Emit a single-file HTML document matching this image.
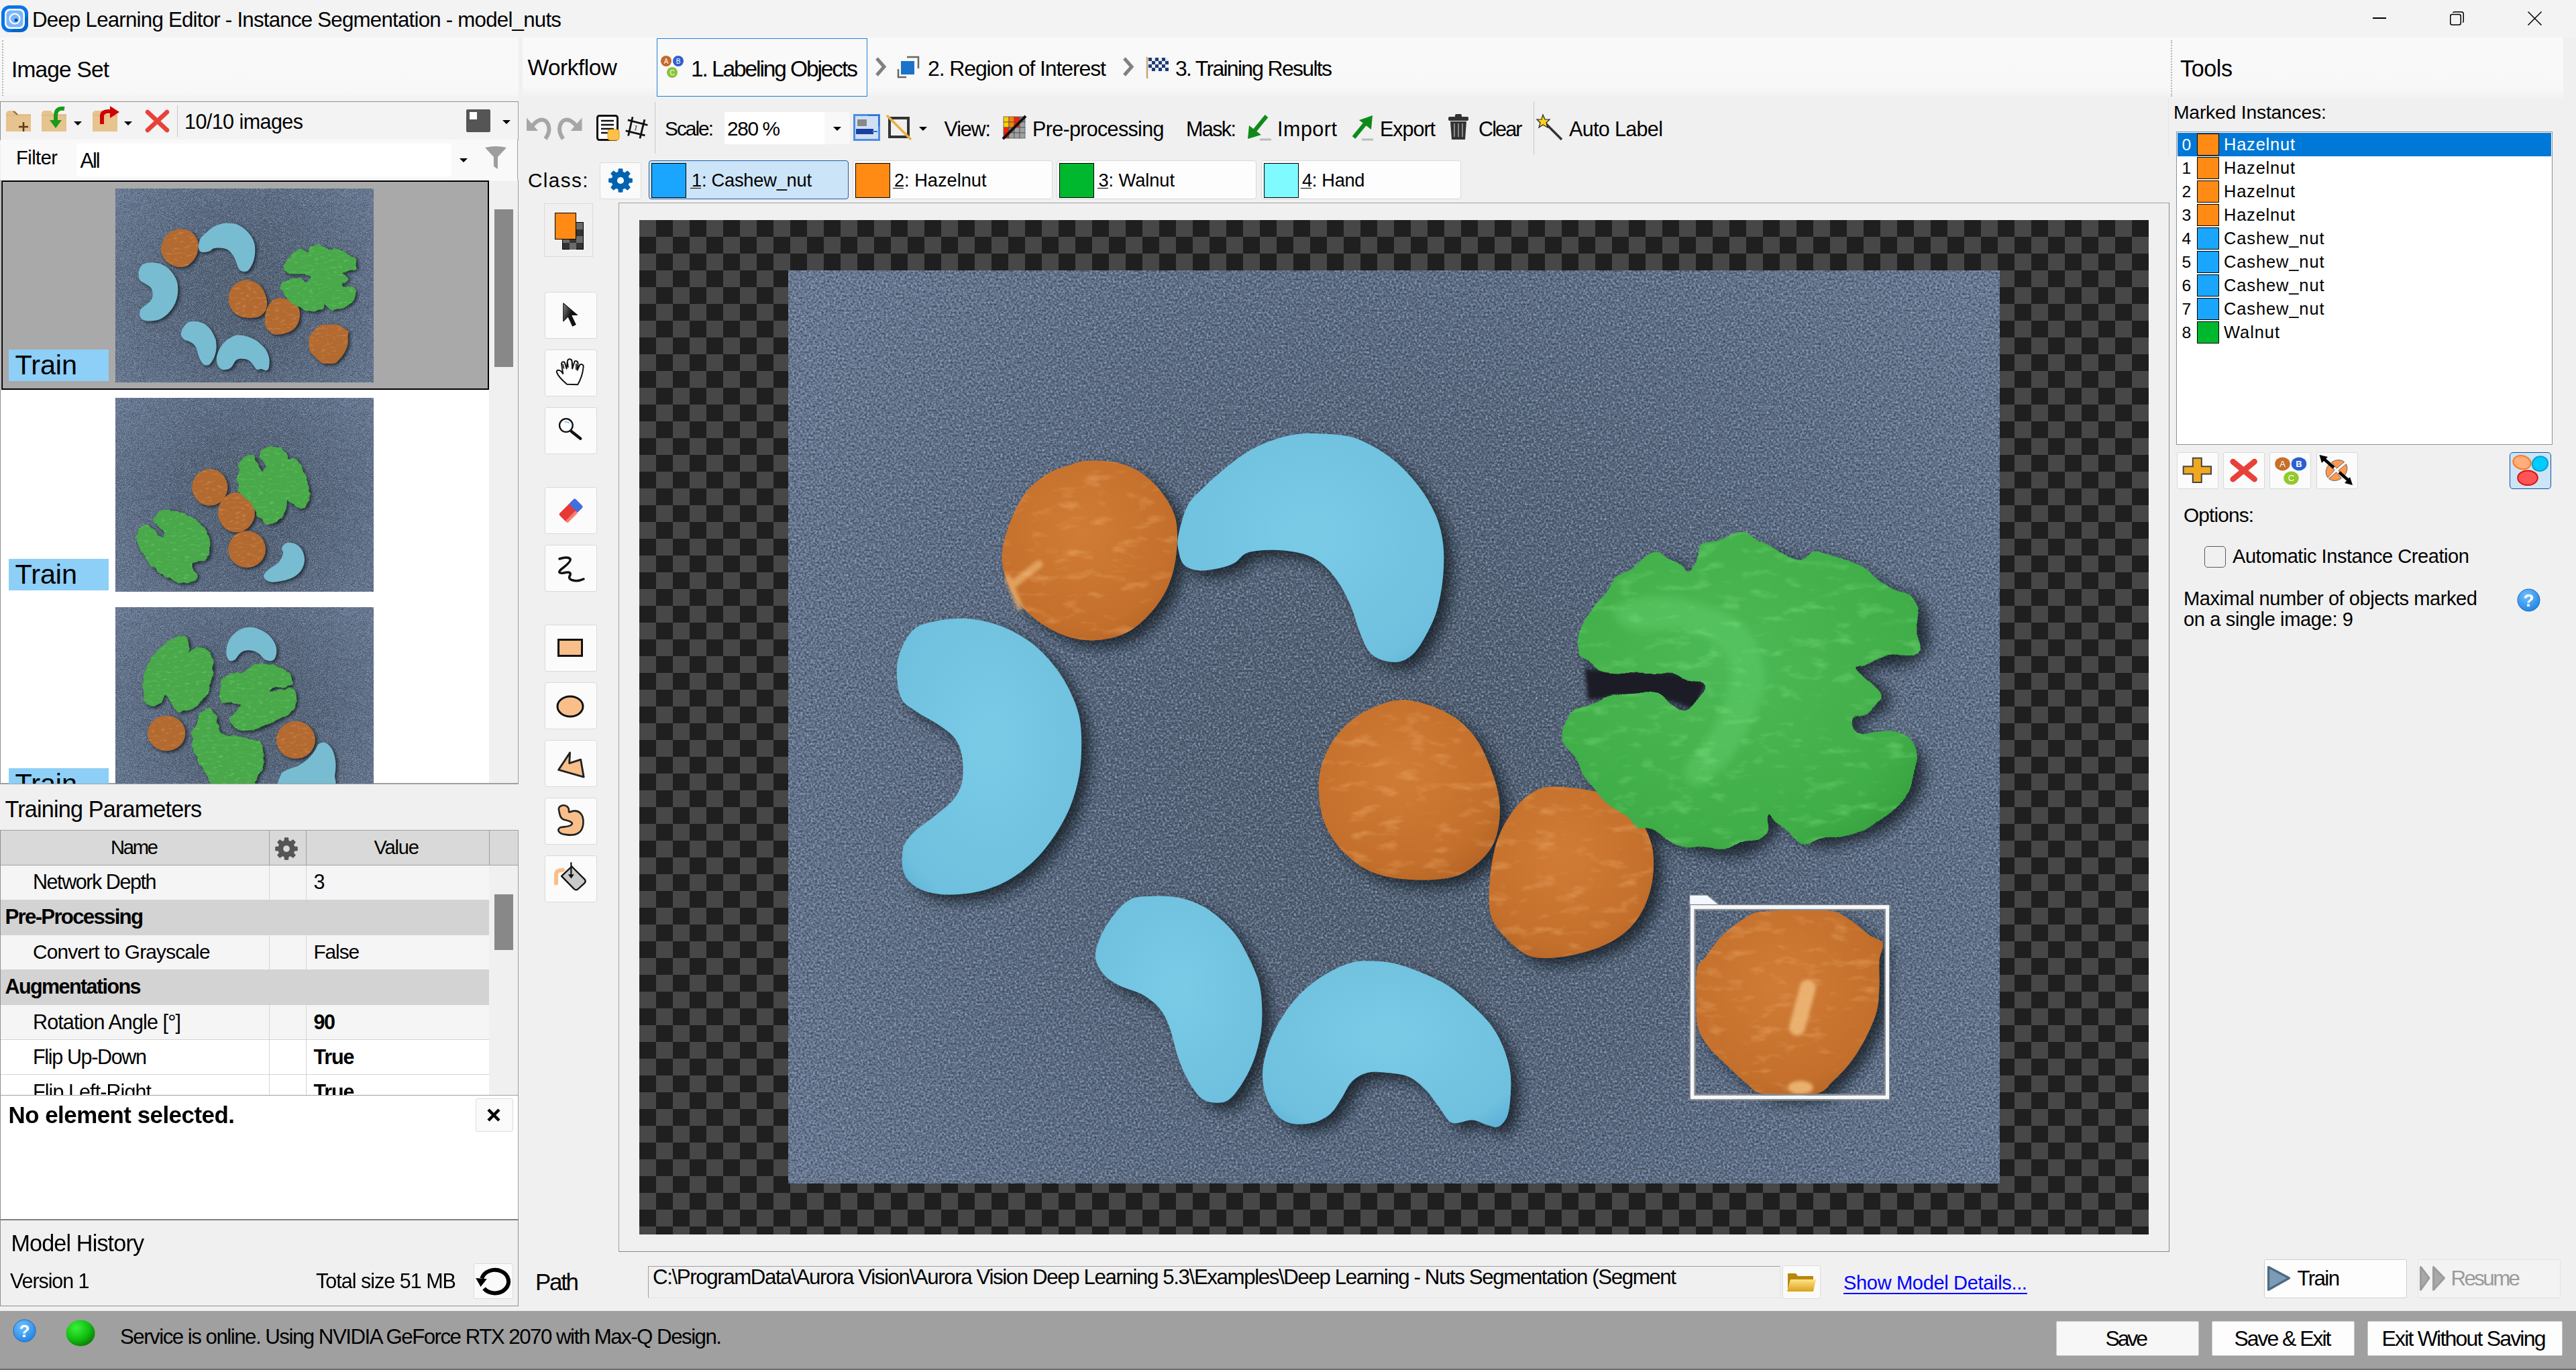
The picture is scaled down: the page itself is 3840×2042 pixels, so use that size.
<!DOCTYPE html><html><head><meta charset="utf-8"><title>Deep Learning Editor</title><style>html,body{margin:0;padding:0;width:3840px;height:2042px;overflow:hidden;background:#f0f0f0;font-family:"Liberation Sans",sans-serif;}
div{position:absolute;box-sizing:border-box;}
.t{white-space:nowrap;}
svg{position:absolute;overflow:visible;}
</style></head><body><svg width="0" height="0" style="position:absolute;left:0;top:0"><defs><radialGradient id="bgG" gradientUnits="userSpaceOnUse" cx="930" cy="760" r="1150"><stop offset="0" stop-color="#4f5b6c"/><stop offset="0.45" stop-color="#56647a"/><stop offset="0.8" stop-color="#627189"/><stop offset="1" stop-color="#6a7892"/></radialGradient><radialGradient id="hzG" cx="0.45" cy="0.4" r="0.65"><stop offset="0" stop-color="#d07c36"/><stop offset="0.8" stop-color="#c4702c"/><stop offset="1" stop-color="#b86628"/></radialGradient><radialGradient id="csG" cx="0.5" cy="0.45" r="0.7"><stop offset="0" stop-color="#7acbe6"/><stop offset="0.85" stop-color="#6ec0de"/><stop offset="1" stop-color="#5eb2d8"/></radialGradient><radialGradient id="wnG" cx="0.45" cy="0.4" r="0.7"><stop offset="0" stop-color="#4cb955"/><stop offset="0.8" stop-color="#40ad48"/><stop offset="1" stop-color="#35a03d"/></radialGradient><filter id="nz" color-interpolation-filters="sRGB" x="0" y="0" width="1" height="1" filterUnits="objectBoundingBox"><feTurbulence type="fractalNoise" baseFrequency="0.32" numOctaves="2" seed="7" result="n"/><feColorMatrix in="n" type="matrix" values="0 0 0 0 0.6  0 0 0 0 0.7  0 0 0 0 0.8  2.4 0 0 0 -1.2" result="l"/><feColorMatrix in="n" type="matrix" values="0 0 0 0 0.2  0 0 0 0 0.25  0 0 0 0 0.3  -2.4 0 0 0 1.2" result="d"/><feMerge><feMergeNode in="l"/><feMergeNode in="d"/></feMerge></filter><filter id="nz2" x="0" y="0" width="1" height="1"><feTurbulence type="fractalNoise" baseFrequency="0.03 0.06" numOctaves="3" seed="2" result="n"/><feColorMatrix in="n" type="matrix" values="0 0 0 0 0  0 0 0 0 0  0 0 0 0 0  0.9 0 0 0 -0.38" result="m"/><feComposite in="m" in2="SourceGraphic" operator="in"/></filter><filter id="lump" x="-0.1" y="-0.1" width="1.2" height="1.2"><feTurbulence type="fractalNoise" baseFrequency="0.022" numOctaves="1" seed="11" result="t"/><feDisplacementMap in="SourceGraphic" in2="t" scale="34" xChannelSelector="R" yChannelSelector="G"/></filter><filter id="tex" color-interpolation-filters="sRGB" x="0" y="0" width="1" height="1"><feTurbulence type="fractalNoise" baseFrequency="0.025 0.06" numOctaves="3" seed="5" result="n"/><feColorMatrix in="n" type="matrix" values="0 0 0 0 0  0 0 0 0 0  0 0 0 0 0  1.0 0 0 0 -0.55" result="m"/><feComposite in="SourceGraphic" in2="m" operator="in"/></filter><filter id="shd" x="-0.2" y="-0.2" width="1.4" height="1.4"><feGaussianBlur stdDeviation="9"/></filter><filter id="bl2" x="-0.3" y="-0.3" width="1.6" height="1.6"><feGaussianBlur stdDeviation="2.5"/></filter><filter id="bl4" x="-0.2" y="-0.2" width="1.4" height="1.4"><feGaussianBlur stdDeviation="6"/></filter><g id="img1"><rect width="1818" height="1370" fill="url(#bgG)"/><rect width="1818" height="1370" fill="#000" filter="url(#nz)"/><g filter="url(#shd)" fill="#10151c" opacity="0.72" transform="translate(13,11)"><path d="M448.5,285.7 C460.8,285.1 481.5,285.6 495.5,289.0 C509.5,292.4 521.3,297.9 532.5,305.8 C543.7,313.7 554.7,324.9 562.8,336.1 C570.9,347.3 577.9,359.0 581.3,373.0 C584.7,387.0 584.4,404.4 583.0,420.1 C581.6,435.8 578.5,452.5 572.9,467.1 C567.3,481.7 559.4,495.2 549.3,507.5 C539.2,519.8 525.7,533.3 512.3,541.1 C498.9,548.9 483.2,552.8 468.7,554.5 C454.1,556.2 439.6,555.1 425.0,551.2 C410.4,547.3 394.2,539.4 381.3,531.0 C368.4,522.6 356.7,512.0 347.7,500.8 C338.7,489.6 332.0,476.3 327.5,464.0 C323.0,451.7 320.2,440.5 320.8,427.0 C321.4,413.5 325.3,398.2 330.9,383.1 C336.5,368.0 344.9,349.0 354.4,336.1 C363.9,323.2 376.8,313.1 388.0,305.8 C399.2,298.5 411.5,295.8 421.6,292.4 C431.7,289.0 436.2,286.3 448.5,285.7 Z"/><path d="M925.0,644.5 C945.0,645.3 972.5,655.3 990.0,664.5 C1007.5,673.7 1019.2,685.3 1030.0,699.5 C1040.8,713.7 1048.8,732.8 1055.0,749.5 C1061.2,766.2 1066.2,782.8 1067.5,799.5 C1068.8,816.2 1067.1,835.3 1062.5,849.5 C1057.9,863.7 1050.4,874.5 1040.0,884.5 C1029.6,894.5 1016.7,904.5 1000.0,909.5 C983.3,914.5 960.0,915.3 940.0,914.5 C920.0,913.7 897.5,911.2 880.0,904.5 C862.5,897.8 847.5,887.0 835.0,874.5 C822.5,862.0 811.5,846.2 805.0,829.5 C798.5,812.8 796.0,791.2 796.0,774.5 C796.0,757.8 799.3,743.7 805.0,729.5 C810.7,715.3 819.2,701.2 830.0,689.5 C840.8,677.8 854.2,667.0 870.0,659.5 C885.8,652.0 905.0,643.7 925.0,644.5 Z"/><path d="M1150.0,774.5 C1167.5,774.5 1200.0,777.8 1220.0,784.5 C1240.0,791.2 1257.5,802.0 1270.0,814.5 C1282.5,827.0 1290.4,843.7 1295.0,859.5 C1299.6,875.3 1299.2,893.7 1297.5,909.5 C1295.8,925.3 1291.2,941.2 1285.0,954.5 C1278.8,967.8 1270.8,979.5 1260.0,989.5 C1249.2,999.5 1235.8,1007.8 1220.0,1014.5 C1204.2,1021.2 1182.5,1027.0 1165.0,1029.5 C1147.5,1032.0 1129.2,1033.7 1115.0,1029.5 C1100.8,1025.3 1090.0,1014.5 1080.0,1004.5 C1070.0,994.5 1059.6,983.7 1055.0,969.5 C1050.4,955.3 1051.2,937.8 1052.5,919.5 C1053.8,901.2 1057.1,877.0 1062.5,859.5 C1067.9,842.0 1076.2,827.0 1085.0,814.5 C1093.8,802.0 1104.2,791.2 1115.0,784.5 C1125.8,777.8 1132.5,774.5 1150.0,774.5 Z"/><path d="M1463.8,961.8 C1484.6,959.7 1537.5,958.7 1558.7,960.6 C1579.9,962.5 1580.4,966.9 1591.2,973.1 C1602.0,979.4 1615.2,992.1 1623.7,998.1 C1632.2,1004.1 1640.1,1003.0 1642.4,1009.3 C1644.7,1015.5 1638.2,1025.0 1637.4,1035.6 C1636.6,1046.2 1638.0,1060.5 1637.4,1073.0 C1636.8,1085.5 1636.8,1098.0 1633.7,1110.5 C1630.6,1123.0 1625.0,1135.5 1618.7,1148.0 C1612.5,1160.5 1604.5,1174.2 1596.2,1185.5 C1587.9,1196.8 1577.9,1207.2 1568.7,1215.5 C1559.5,1223.8 1558.7,1232.2 1541.2,1235.5 C1523.7,1238.8 1480.9,1238.0 1463.8,1235.5 C1446.7,1233.0 1448.0,1227.6 1438.8,1220.5 C1429.6,1213.4 1418.4,1202.2 1408.8,1193.0 C1399.2,1183.8 1388.6,1175.1 1381.3,1165.5 C1374.0,1155.9 1368.1,1146.8 1365.0,1135.5 C1361.9,1124.2 1362.7,1112.6 1362.5,1098.0 C1362.3,1083.4 1361.5,1059.2 1363.8,1048.0 C1366.1,1036.8 1370.0,1038.9 1376.3,1030.6 C1382.5,1022.3 1391.7,1007.7 1401.3,998.1 C1410.9,988.5 1423.4,979.2 1433.8,973.1 C1444.2,967.0 1443.0,963.9 1463.8,961.8 Z"/><path d="M585.5,397.2 C587.8,386.0 593.0,364.6 599.5,352.5 C606.0,340.4 615.8,333.5 624.6,324.6 C633.4,315.8 642.3,307.8 652.5,299.4 C662.7,291.0 674.8,281.3 686.0,274.3 C697.2,267.3 707.5,262.1 719.6,257.5 C731.7,252.8 745.2,248.5 758.7,246.4 C772.2,244.3 786.5,244.5 800.5,245.0 C814.5,245.5 829.8,246.2 842.4,249.2 C855.0,252.2 864.7,257.1 875.9,263.1 C887.1,269.2 899.2,277.1 909.5,285.5 C919.8,293.9 929.0,303.6 937.4,313.4 C945.8,323.2 953.2,332.9 959.7,344.1 C966.2,355.3 972.5,367.8 976.5,380.4 C980.5,393.0 982.6,405.5 983.5,419.5 C984.4,433.5 983.7,449.3 982.1,464.2 C980.5,479.1 977.4,495.9 973.7,508.9 C970.0,521.9 965.3,531.7 959.7,542.4 C954.1,553.1 947.2,565.6 940.2,573.1 C933.2,580.6 926.2,585.2 917.8,587.1 C909.4,589.0 897.8,587.1 889.9,584.3 C882.0,581.5 876.0,577.8 870.4,570.3 C864.8,562.8 860.6,550.3 856.4,539.6 C852.2,528.9 849.9,517.3 845.2,506.1 C840.6,494.9 834.5,482.4 828.5,472.6 C822.5,462.8 815.9,454.4 808.9,447.4 C801.9,440.4 795.0,434.9 786.6,430.7 C778.2,426.5 769.0,424.2 758.7,422.3 C748.5,420.4 736.8,419.3 725.1,419.5 C713.5,419.7 698.1,420.4 688.8,423.7 C679.5,427.0 676.8,435.2 669.3,439.1 C661.8,443.1 653.0,445.5 644.1,447.4 C635.2,449.2 624.6,451.1 616.2,450.2 C607.8,449.3 599.0,447.0 593.9,441.9 C588.8,436.8 586.9,426.9 585.5,419.5 C584.1,412.1 583.2,408.4 585.5,397.2 Z"/><path d="M162.9,601.7 C162.9,589.3 165.2,578.6 169.7,567.9 C174.2,557.2 180.9,544.5 189.9,537.5 C198.9,530.5 211.3,528.2 223.7,525.7 C236.1,523.2 250.8,521.8 264.3,522.3 C277.8,522.8 291.9,525.4 304.9,529.0 C317.8,532.6 330.2,537.7 342.0,544.2 C353.8,550.7 365.7,558.9 375.8,567.9 C385.9,576.9 395.0,587.6 402.9,598.3 C410.8,609.0 417.6,620.3 423.2,632.1 C428.8,643.9 433.9,656.3 436.7,669.3 C439.5,682.3 440.1,695.2 440.1,709.9 C440.1,724.5 439.5,741.4 436.7,757.2 C433.9,773.0 429.4,789.3 423.2,804.5 C417.0,819.7 408.5,834.9 399.5,848.4 C390.5,861.9 380.9,874.3 369.1,885.6 C357.3,896.9 343.1,908.1 328.5,916.0 C313.9,923.9 297.5,929.6 281.2,933.0 C264.9,936.4 245.2,937.4 230.5,936.3 C215.8,935.2 202.9,931.8 193.3,926.2 C183.7,920.6 176.4,912.6 173.0,902.5 C169.6,892.4 170.2,875.4 173.0,865.3 C175.8,855.2 182.0,849.6 189.9,841.7 C197.8,833.8 210.8,825.9 220.4,818.0 C230.0,810.1 240.7,802.9 247.4,794.4 C254.2,785.9 258.6,778.0 260.9,767.3 C263.1,756.6 262.6,740.8 260.9,730.1 C259.2,719.4 256.4,711.0 250.8,703.1 C245.2,695.2 236.7,689.6 227.1,682.8 C217.5,676.0 202.9,669.2 193.3,662.5 C183.7,655.8 174.8,652.4 169.7,642.3 C164.6,632.2 162.9,614.1 162.9,601.7 Z"/><path d="M461.0,1031.0 C460.0,1021.7 463.7,1011.3 468.0,1001.0 C472.3,990.7 479.5,978.5 487.0,969.0 C494.5,959.5 503.2,949.0 513.0,944.0 C522.8,939.0 534.0,939.5 546.0,939.0 C558.0,938.5 573.0,938.8 585.0,941.0 C597.0,943.2 608.2,947.3 618.0,952.0 C627.8,956.7 635.3,961.8 644.0,969.0 C652.7,976.2 662.5,985.3 670.0,995.0 C677.5,1004.7 683.0,1015.0 689.0,1027.0 C695.0,1039.0 702.3,1053.8 706.0,1067.0 C709.7,1080.2 710.5,1093.0 711.0,1106.0 C711.5,1119.0 711.0,1132.0 709.0,1145.0 C707.0,1158.0 703.3,1172.0 699.0,1184.0 C694.7,1196.0 689.0,1207.2 683.0,1217.0 C677.0,1226.8 669.5,1237.7 663.0,1243.0 C656.5,1248.3 651.0,1249.0 644.0,1249.0 C637.0,1249.0 628.2,1248.3 621.0,1243.0 C613.8,1237.7 607.0,1227.3 601.0,1217.0 C595.0,1206.7 589.8,1194.7 585.0,1181.0 C580.2,1167.3 576.8,1147.5 572.0,1135.0 C567.2,1122.5 563.0,1114.2 556.0,1106.0 C549.0,1097.8 539.8,1091.5 530.0,1086.0 C520.2,1080.5 506.3,1077.8 497.0,1073.0 C487.7,1068.2 480.0,1064.0 474.0,1057.0 C468.0,1050.0 462.0,1040.3 461.0,1031.0 Z"/><path d="M712.0,1200.0 C713.0,1187.0 717.0,1171.5 722.0,1158.0 C727.0,1144.5 734.3,1131.0 742.0,1119.0 C749.7,1107.0 758.3,1095.8 768.0,1086.0 C777.7,1076.2 788.0,1067.7 800.0,1060.0 C812.0,1052.3 828.0,1044.0 840.0,1040.0 C852.0,1036.0 860.2,1036.0 872.0,1036.0 C883.8,1036.0 897.8,1037.0 911.0,1040.0 C924.2,1043.0 937.8,1048.5 951.0,1054.0 C964.2,1059.5 978.2,1065.5 990.0,1073.0 C1001.8,1080.5 1011.7,1089.7 1022.0,1099.0 C1032.3,1108.3 1043.8,1118.7 1052.0,1129.0 C1060.2,1139.3 1065.8,1149.2 1071.0,1161.0 C1076.2,1172.8 1080.8,1187.5 1083.0,1200.0 C1085.2,1212.5 1084.7,1224.5 1084.0,1236.0 C1083.3,1247.5 1082.2,1260.8 1079.0,1269.0 C1075.8,1277.2 1070.2,1282.8 1065.0,1285.0 C1059.8,1287.2 1054.5,1283.7 1048.0,1282.0 C1041.5,1280.3 1034.7,1275.5 1026.0,1275.0 C1017.3,1274.5 1004.2,1282.2 996.0,1279.0 C987.8,1275.8 983.5,1264.2 977.0,1256.0 C970.5,1247.8 964.7,1237.7 957.0,1230.0 C949.3,1222.3 940.8,1214.3 931.0,1210.0 C921.2,1205.7 908.3,1205.0 898.0,1204.0 C887.7,1203.0 877.7,1201.8 869.0,1204.0 C860.3,1206.2 852.5,1210.5 846.0,1217.0 C839.5,1223.5 835.5,1234.8 830.0,1243.0 C824.5,1251.2 820.2,1260.0 813.0,1266.0 C805.8,1272.0 796.7,1276.7 787.0,1279.0 C777.3,1281.3 764.2,1282.2 755.0,1280.0 C745.8,1277.8 738.5,1273.3 732.0,1266.0 C725.5,1258.7 719.3,1247.0 716.0,1236.0 C712.7,1225.0 711.0,1213.0 712.0,1200.0 Z"/><path d="M1185.0,564.5 C1185.8,555.3 1188.3,538.7 1195.0,524.5 C1201.7,510.3 1213.3,492.8 1225.0,479.5 C1236.7,466.2 1251.7,453.7 1265.0,444.5 C1278.3,435.3 1294.2,426.2 1305.0,424.5 C1315.8,422.8 1322.5,429.5 1330.0,434.5 C1337.5,439.5 1343.3,458.7 1350.0,454.5 C1356.7,450.3 1359.2,418.2 1370.0,409.5 C1380.8,400.8 1399.2,402.0 1415.0,402.0 C1430.8,402.0 1450.0,405.3 1465.0,409.5 C1480.0,413.7 1492.5,425.3 1505.0,427.0 C1517.5,428.7 1525.8,418.2 1540.0,419.5 C1554.2,420.8 1573.3,427.0 1590.0,434.5 C1606.7,442.0 1624.2,456.2 1640.0,464.5 C1655.8,472.8 1675.4,474.5 1685.0,484.5 C1694.6,494.5 1695.8,512.0 1697.5,524.5 C1699.2,537.0 1699.6,550.3 1695.0,559.5 C1690.4,568.7 1682.5,574.9 1670.0,579.5 C1657.5,584.1 1631.7,584.5 1620.0,587.0 C1608.3,589.5 1598.3,589.9 1600.0,594.5 C1601.7,599.1 1623.3,607.0 1630.0,614.5 C1636.7,622.0 1642.5,632.0 1640.0,639.5 C1637.5,647.0 1622.5,654.5 1615.0,659.5 C1607.5,664.5 1597.5,665.3 1595.0,669.5 C1592.5,673.7 1592.5,680.3 1600.0,684.5 C1607.5,688.7 1625.8,690.3 1640.0,694.5 C1654.2,698.7 1676.7,698.7 1685.0,709.5 C1693.3,720.3 1691.7,746.2 1690.0,759.5 C1688.3,772.8 1683.3,778.7 1675.0,789.5 C1666.7,800.3 1654.2,815.3 1640.0,824.5 C1625.8,833.7 1606.7,839.5 1590.0,844.5 C1573.3,849.5 1554.2,854.5 1540.0,854.5 C1525.8,854.5 1515.0,851.2 1505.0,844.5 C1495.0,837.8 1485.8,816.2 1480.0,814.5 C1474.2,812.8 1476.7,827.0 1470.0,834.5 C1463.3,842.0 1451.7,853.7 1440.0,859.5 C1428.3,865.3 1416.7,869.5 1400.0,869.5 C1383.3,869.5 1358.3,864.5 1340.0,859.5 C1321.7,854.5 1305.0,847.8 1290.0,839.5 C1275.0,831.2 1262.5,819.5 1250.0,809.5 C1237.5,799.5 1225.8,791.2 1215.0,779.5 C1204.2,767.8 1192.5,752.8 1185.0,739.5 C1177.5,726.2 1171.7,712.8 1170.0,699.5 C1168.3,686.2 1166.7,669.5 1175.0,659.5 C1183.3,649.5 1202.5,643.7 1220.0,639.5 C1237.5,635.3 1261.7,633.7 1280.0,634.5 C1298.3,635.3 1316.7,641.2 1330.0,644.5 C1343.3,647.8 1352.9,658.7 1360.0,654.5 C1367.1,650.3 1375.8,627.4 1372.5,619.5 C1369.2,611.6 1357.1,609.5 1340.0,607.0 C1322.9,604.5 1290.8,605.8 1270.0,604.5 C1249.2,603.2 1228.3,603.7 1215.0,599.5 C1201.7,595.3 1195.0,585.3 1190.0,579.5 C1185.0,573.7 1184.2,573.7 1185.0,564.5 Z"/></g><path d="M1195,598 L1270,602 L1342,606 L1376,620 L1362,660 L1330,648 L1280,638 L1200,645 Z" fill="#1a1e26" filter="url(#bl2)"/><path d="M448.5,285.7 C460.8,285.1 481.5,285.6 495.5,289.0 C509.5,292.4 521.3,297.9 532.5,305.8 C543.7,313.7 554.7,324.9 562.8,336.1 C570.9,347.3 577.9,359.0 581.3,373.0 C584.7,387.0 584.4,404.4 583.0,420.1 C581.6,435.8 578.5,452.5 572.9,467.1 C567.3,481.7 559.4,495.2 549.3,507.5 C539.2,519.8 525.7,533.3 512.3,541.1 C498.9,548.9 483.2,552.8 468.7,554.5 C454.1,556.2 439.6,555.1 425.0,551.2 C410.4,547.3 394.2,539.4 381.3,531.0 C368.4,522.6 356.7,512.0 347.7,500.8 C338.7,489.6 332.0,476.3 327.5,464.0 C323.0,451.7 320.2,440.5 320.8,427.0 C321.4,413.5 325.3,398.2 330.9,383.1 C336.5,368.0 344.9,349.0 354.4,336.1 C363.9,323.2 376.8,313.1 388.0,305.8 C399.2,298.5 411.5,295.8 421.6,292.4 C431.7,289.0 436.2,286.3 448.5,285.7 Z" fill="url(#hzG)"/><path d="M925.0,644.5 C945.0,645.3 972.5,655.3 990.0,664.5 C1007.5,673.7 1019.2,685.3 1030.0,699.5 C1040.8,713.7 1048.8,732.8 1055.0,749.5 C1061.2,766.2 1066.2,782.8 1067.5,799.5 C1068.8,816.2 1067.1,835.3 1062.5,849.5 C1057.9,863.7 1050.4,874.5 1040.0,884.5 C1029.6,894.5 1016.7,904.5 1000.0,909.5 C983.3,914.5 960.0,915.3 940.0,914.5 C920.0,913.7 897.5,911.2 880.0,904.5 C862.5,897.8 847.5,887.0 835.0,874.5 C822.5,862.0 811.5,846.2 805.0,829.5 C798.5,812.8 796.0,791.2 796.0,774.5 C796.0,757.8 799.3,743.7 805.0,729.5 C810.7,715.3 819.2,701.2 830.0,689.5 C840.8,677.8 854.2,667.0 870.0,659.5 C885.8,652.0 905.0,643.7 925.0,644.5 Z" fill="url(#hzG)"/><path d="M1150.0,774.5 C1167.5,774.5 1200.0,777.8 1220.0,784.5 C1240.0,791.2 1257.5,802.0 1270.0,814.5 C1282.5,827.0 1290.4,843.7 1295.0,859.5 C1299.6,875.3 1299.2,893.7 1297.5,909.5 C1295.8,925.3 1291.2,941.2 1285.0,954.5 C1278.8,967.8 1270.8,979.5 1260.0,989.5 C1249.2,999.5 1235.8,1007.8 1220.0,1014.5 C1204.2,1021.2 1182.5,1027.0 1165.0,1029.5 C1147.5,1032.0 1129.2,1033.7 1115.0,1029.5 C1100.8,1025.3 1090.0,1014.5 1080.0,1004.5 C1070.0,994.5 1059.6,983.7 1055.0,969.5 C1050.4,955.3 1051.2,937.8 1052.5,919.5 C1053.8,901.2 1057.1,877.0 1062.5,859.5 C1067.9,842.0 1076.2,827.0 1085.0,814.5 C1093.8,802.0 1104.2,791.2 1115.0,784.5 C1125.8,777.8 1132.5,774.5 1150.0,774.5 Z" fill="url(#hzG)"/><path d="M1463.8,961.8 C1484.6,959.7 1537.5,958.7 1558.7,960.6 C1579.9,962.5 1580.4,966.9 1591.2,973.1 C1602.0,979.4 1615.2,992.1 1623.7,998.1 C1632.2,1004.1 1640.1,1003.0 1642.4,1009.3 C1644.7,1015.5 1638.2,1025.0 1637.4,1035.6 C1636.6,1046.2 1638.0,1060.5 1637.4,1073.0 C1636.8,1085.5 1636.8,1098.0 1633.7,1110.5 C1630.6,1123.0 1625.0,1135.5 1618.7,1148.0 C1612.5,1160.5 1604.5,1174.2 1596.2,1185.5 C1587.9,1196.8 1577.9,1207.2 1568.7,1215.5 C1559.5,1223.8 1558.7,1232.2 1541.2,1235.5 C1523.7,1238.8 1480.9,1238.0 1463.8,1235.5 C1446.7,1233.0 1448.0,1227.6 1438.8,1220.5 C1429.6,1213.4 1418.4,1202.2 1408.8,1193.0 C1399.2,1183.8 1388.6,1175.1 1381.3,1165.5 C1374.0,1155.9 1368.1,1146.8 1365.0,1135.5 C1361.9,1124.2 1362.7,1112.6 1362.5,1098.0 C1362.3,1083.4 1361.5,1059.2 1363.8,1048.0 C1366.1,1036.8 1370.0,1038.9 1376.3,1030.6 C1382.5,1022.3 1391.7,1007.7 1401.3,998.1 C1410.9,988.5 1423.4,979.2 1433.8,973.1 C1444.2,967.0 1443.0,963.9 1463.8,961.8 Z" fill="url(#hzG)"/><path d="M585.5,397.2 C587.8,386.0 593.0,364.6 599.5,352.5 C606.0,340.4 615.8,333.5 624.6,324.6 C633.4,315.8 642.3,307.8 652.5,299.4 C662.7,291.0 674.8,281.3 686.0,274.3 C697.2,267.3 707.5,262.1 719.6,257.5 C731.7,252.8 745.2,248.5 758.7,246.4 C772.2,244.3 786.5,244.5 800.5,245.0 C814.5,245.5 829.8,246.2 842.4,249.2 C855.0,252.2 864.7,257.1 875.9,263.1 C887.1,269.2 899.2,277.1 909.5,285.5 C919.8,293.9 929.0,303.6 937.4,313.4 C945.8,323.2 953.2,332.9 959.7,344.1 C966.2,355.3 972.5,367.8 976.5,380.4 C980.5,393.0 982.6,405.5 983.5,419.5 C984.4,433.5 983.7,449.3 982.1,464.2 C980.5,479.1 977.4,495.9 973.7,508.9 C970.0,521.9 965.3,531.7 959.7,542.4 C954.1,553.1 947.2,565.6 940.2,573.1 C933.2,580.6 926.2,585.2 917.8,587.1 C909.4,589.0 897.8,587.1 889.9,584.3 C882.0,581.5 876.0,577.8 870.4,570.3 C864.8,562.8 860.6,550.3 856.4,539.6 C852.2,528.9 849.9,517.3 845.2,506.1 C840.6,494.9 834.5,482.4 828.5,472.6 C822.5,462.8 815.9,454.4 808.9,447.4 C801.9,440.4 795.0,434.9 786.6,430.7 C778.2,426.5 769.0,424.2 758.7,422.3 C748.5,420.4 736.8,419.3 725.1,419.5 C713.5,419.7 698.1,420.4 688.8,423.7 C679.5,427.0 676.8,435.2 669.3,439.1 C661.8,443.1 653.0,445.5 644.1,447.4 C635.2,449.2 624.6,451.1 616.2,450.2 C607.8,449.3 599.0,447.0 593.9,441.9 C588.8,436.8 586.9,426.9 585.5,419.5 C584.1,412.1 583.2,408.4 585.5,397.2 Z" fill="url(#csG)"/><path d="M162.9,601.7 C162.9,589.3 165.2,578.6 169.7,567.9 C174.2,557.2 180.9,544.5 189.9,537.5 C198.9,530.5 211.3,528.2 223.7,525.7 C236.1,523.2 250.8,521.8 264.3,522.3 C277.8,522.8 291.9,525.4 304.9,529.0 C317.8,532.6 330.2,537.7 342.0,544.2 C353.8,550.7 365.7,558.9 375.8,567.9 C385.9,576.9 395.0,587.6 402.9,598.3 C410.8,609.0 417.6,620.3 423.2,632.1 C428.8,643.9 433.9,656.3 436.7,669.3 C439.5,682.3 440.1,695.2 440.1,709.9 C440.1,724.5 439.5,741.4 436.7,757.2 C433.9,773.0 429.4,789.3 423.2,804.5 C417.0,819.7 408.5,834.9 399.5,848.4 C390.5,861.9 380.9,874.3 369.1,885.6 C357.3,896.9 343.1,908.1 328.5,916.0 C313.9,923.9 297.5,929.6 281.2,933.0 C264.9,936.4 245.2,937.4 230.5,936.3 C215.8,935.2 202.9,931.8 193.3,926.2 C183.7,920.6 176.4,912.6 173.0,902.5 C169.6,892.4 170.2,875.4 173.0,865.3 C175.8,855.2 182.0,849.6 189.9,841.7 C197.8,833.8 210.8,825.9 220.4,818.0 C230.0,810.1 240.7,802.9 247.4,794.4 C254.2,785.9 258.6,778.0 260.9,767.3 C263.1,756.6 262.6,740.8 260.9,730.1 C259.2,719.4 256.4,711.0 250.8,703.1 C245.2,695.2 236.7,689.6 227.1,682.8 C217.5,676.0 202.9,669.2 193.3,662.5 C183.7,655.8 174.8,652.4 169.7,642.3 C164.6,632.2 162.9,614.1 162.9,601.7 Z" fill="url(#csG)"/><path d="M461.0,1031.0 C460.0,1021.7 463.7,1011.3 468.0,1001.0 C472.3,990.7 479.5,978.5 487.0,969.0 C494.5,959.5 503.2,949.0 513.0,944.0 C522.8,939.0 534.0,939.5 546.0,939.0 C558.0,938.5 573.0,938.8 585.0,941.0 C597.0,943.2 608.2,947.3 618.0,952.0 C627.8,956.7 635.3,961.8 644.0,969.0 C652.7,976.2 662.5,985.3 670.0,995.0 C677.5,1004.7 683.0,1015.0 689.0,1027.0 C695.0,1039.0 702.3,1053.8 706.0,1067.0 C709.7,1080.2 710.5,1093.0 711.0,1106.0 C711.5,1119.0 711.0,1132.0 709.0,1145.0 C707.0,1158.0 703.3,1172.0 699.0,1184.0 C694.7,1196.0 689.0,1207.2 683.0,1217.0 C677.0,1226.8 669.5,1237.7 663.0,1243.0 C656.5,1248.3 651.0,1249.0 644.0,1249.0 C637.0,1249.0 628.2,1248.3 621.0,1243.0 C613.8,1237.7 607.0,1227.3 601.0,1217.0 C595.0,1206.7 589.8,1194.7 585.0,1181.0 C580.2,1167.3 576.8,1147.5 572.0,1135.0 C567.2,1122.5 563.0,1114.2 556.0,1106.0 C549.0,1097.8 539.8,1091.5 530.0,1086.0 C520.2,1080.5 506.3,1077.8 497.0,1073.0 C487.7,1068.2 480.0,1064.0 474.0,1057.0 C468.0,1050.0 462.0,1040.3 461.0,1031.0 Z" fill="url(#csG)"/><path d="M712.0,1200.0 C713.0,1187.0 717.0,1171.5 722.0,1158.0 C727.0,1144.5 734.3,1131.0 742.0,1119.0 C749.7,1107.0 758.3,1095.8 768.0,1086.0 C777.7,1076.2 788.0,1067.7 800.0,1060.0 C812.0,1052.3 828.0,1044.0 840.0,1040.0 C852.0,1036.0 860.2,1036.0 872.0,1036.0 C883.8,1036.0 897.8,1037.0 911.0,1040.0 C924.2,1043.0 937.8,1048.5 951.0,1054.0 C964.2,1059.5 978.2,1065.5 990.0,1073.0 C1001.8,1080.5 1011.7,1089.7 1022.0,1099.0 C1032.3,1108.3 1043.8,1118.7 1052.0,1129.0 C1060.2,1139.3 1065.8,1149.2 1071.0,1161.0 C1076.2,1172.8 1080.8,1187.5 1083.0,1200.0 C1085.2,1212.5 1084.7,1224.5 1084.0,1236.0 C1083.3,1247.5 1082.2,1260.8 1079.0,1269.0 C1075.8,1277.2 1070.2,1282.8 1065.0,1285.0 C1059.8,1287.2 1054.5,1283.7 1048.0,1282.0 C1041.5,1280.3 1034.7,1275.5 1026.0,1275.0 C1017.3,1274.5 1004.2,1282.2 996.0,1279.0 C987.8,1275.8 983.5,1264.2 977.0,1256.0 C970.5,1247.8 964.7,1237.7 957.0,1230.0 C949.3,1222.3 940.8,1214.3 931.0,1210.0 C921.2,1205.7 908.3,1205.0 898.0,1204.0 C887.7,1203.0 877.7,1201.8 869.0,1204.0 C860.3,1206.2 852.5,1210.5 846.0,1217.0 C839.5,1223.5 835.5,1234.8 830.0,1243.0 C824.5,1251.2 820.2,1260.0 813.0,1266.0 C805.8,1272.0 796.7,1276.7 787.0,1279.0 C777.3,1281.3 764.2,1282.2 755.0,1280.0 C745.8,1277.8 738.5,1273.3 732.0,1266.0 C725.5,1258.7 719.3,1247.0 716.0,1236.0 C712.7,1225.0 711.0,1213.0 712.0,1200.0 Z" fill="url(#csG)"/><path d="M1185.0,564.5 C1185.8,555.3 1188.3,538.7 1195.0,524.5 C1201.7,510.3 1213.3,492.8 1225.0,479.5 C1236.7,466.2 1251.7,453.7 1265.0,444.5 C1278.3,435.3 1294.2,426.2 1305.0,424.5 C1315.8,422.8 1322.5,429.5 1330.0,434.5 C1337.5,439.5 1343.3,458.7 1350.0,454.5 C1356.7,450.3 1359.2,418.2 1370.0,409.5 C1380.8,400.8 1399.2,402.0 1415.0,402.0 C1430.8,402.0 1450.0,405.3 1465.0,409.5 C1480.0,413.7 1492.5,425.3 1505.0,427.0 C1517.5,428.7 1525.8,418.2 1540.0,419.5 C1554.2,420.8 1573.3,427.0 1590.0,434.5 C1606.7,442.0 1624.2,456.2 1640.0,464.5 C1655.8,472.8 1675.4,474.5 1685.0,484.5 C1694.6,494.5 1695.8,512.0 1697.5,524.5 C1699.2,537.0 1699.6,550.3 1695.0,559.5 C1690.4,568.7 1682.5,574.9 1670.0,579.5 C1657.5,584.1 1631.7,584.5 1620.0,587.0 C1608.3,589.5 1598.3,589.9 1600.0,594.5 C1601.7,599.1 1623.3,607.0 1630.0,614.5 C1636.7,622.0 1642.5,632.0 1640.0,639.5 C1637.5,647.0 1622.5,654.5 1615.0,659.5 C1607.5,664.5 1597.5,665.3 1595.0,669.5 C1592.5,673.7 1592.5,680.3 1600.0,684.5 C1607.5,688.7 1625.8,690.3 1640.0,694.5 C1654.2,698.7 1676.7,698.7 1685.0,709.5 C1693.3,720.3 1691.7,746.2 1690.0,759.5 C1688.3,772.8 1683.3,778.7 1675.0,789.5 C1666.7,800.3 1654.2,815.3 1640.0,824.5 C1625.8,833.7 1606.7,839.5 1590.0,844.5 C1573.3,849.5 1554.2,854.5 1540.0,854.5 C1525.8,854.5 1515.0,851.2 1505.0,844.5 C1495.0,837.8 1485.8,816.2 1480.0,814.5 C1474.2,812.8 1476.7,827.0 1470.0,834.5 C1463.3,842.0 1451.7,853.7 1440.0,859.5 C1428.3,865.3 1416.7,869.5 1400.0,869.5 C1383.3,869.5 1358.3,864.5 1340.0,859.5 C1321.7,854.5 1305.0,847.8 1290.0,839.5 C1275.0,831.2 1262.5,819.5 1250.0,809.5 C1237.5,799.5 1225.8,791.2 1215.0,779.5 C1204.2,767.8 1192.5,752.8 1185.0,739.5 C1177.5,726.2 1171.7,712.8 1170.0,699.5 C1168.3,686.2 1166.7,669.5 1175.0,659.5 C1183.3,649.5 1202.5,643.7 1220.0,639.5 C1237.5,635.3 1261.7,633.7 1280.0,634.5 C1298.3,635.3 1316.7,641.2 1330.0,644.5 C1343.3,647.8 1352.9,658.7 1360.0,654.5 C1367.1,650.3 1375.8,627.4 1372.5,619.5 C1369.2,611.6 1357.1,609.5 1340.0,607.0 C1322.9,604.5 1290.8,605.8 1270.0,604.5 C1249.2,603.2 1228.3,603.7 1215.0,599.5 C1201.7,595.3 1195.0,585.3 1190.0,579.5 C1185.0,573.7 1184.2,573.7 1185.0,564.5 Z" fill="url(#wnG)" filter="url(#lump)"/><path d="M1239.8,509.4 C1244.0,501.1 1269.0,491.1 1289.8,489.4 C1310.6,487.7 1341.4,492.7 1364.7,499.4 C1388.0,506.1 1413.9,516.1 1429.7,529.4 C1445.5,542.7 1453.8,562.6 1459.6,579.3 C1465.4,595.9 1467.9,611.0 1464.6,629.3 C1461.3,647.6 1448.8,671.0 1439.7,689.3 C1430.6,707.6 1422.2,725.1 1409.7,739.2 C1397.2,753.4 1375.5,772.5 1364.7,774.2 C1353.9,775.9 1342.3,761.7 1344.8,749.2 C1347.3,736.7 1369.7,715.9 1379.7,699.2 C1389.7,682.6 1398.9,666.8 1404.7,649.3 C1410.5,631.8 1417.2,609.3 1414.7,594.3 C1412.2,579.3 1402.2,568.5 1389.7,559.4 C1377.2,550.2 1360.6,542.7 1339.8,539.4 C1319.0,536.1 1281.5,544.4 1264.8,539.4 C1248.1,534.4 1235.6,517.7 1239.8,509.4 Z" fill="#62cf6e" opacity="0.45" filter="url(#bl4)"/><g filter="url(#bl2)"><path d="M1530,1076 L1514,1136" stroke="#eab070" stroke-width="24" stroke-linecap="round"/><ellipse cx="1519" cy="1226" rx="19" ry="10" fill="#eab070"/></g><g filter="url(#bl2)" opacity="0.75"><path d="M376,441 L336,472" stroke="#eab070" stroke-width="12" stroke-linecap="round"/><path d="M330,462 L347,505" stroke="#eab070" stroke-width="10" stroke-linecap="round"/></g><g filter="url(#tex)"><path d="M448.5,285.7 C460.8,285.1 481.5,285.6 495.5,289.0 C509.5,292.4 521.3,297.9 532.5,305.8 C543.7,313.7 554.7,324.9 562.8,336.1 C570.9,347.3 577.9,359.0 581.3,373.0 C584.7,387.0 584.4,404.4 583.0,420.1 C581.6,435.8 578.5,452.5 572.9,467.1 C567.3,481.7 559.4,495.2 549.3,507.5 C539.2,519.8 525.7,533.3 512.3,541.1 C498.9,548.9 483.2,552.8 468.7,554.5 C454.1,556.2 439.6,555.1 425.0,551.2 C410.4,547.3 394.2,539.4 381.3,531.0 C368.4,522.6 356.7,512.0 347.7,500.8 C338.7,489.6 332.0,476.3 327.5,464.0 C323.0,451.7 320.2,440.5 320.8,427.0 C321.4,413.5 325.3,398.2 330.9,383.1 C336.5,368.0 344.9,349.0 354.4,336.1 C363.9,323.2 376.8,313.1 388.0,305.8 C399.2,298.5 411.5,295.8 421.6,292.4 C431.7,289.0 436.2,286.3 448.5,285.7 Z" fill="#ffc080"/><path d="M925.0,644.5 C945.0,645.3 972.5,655.3 990.0,664.5 C1007.5,673.7 1019.2,685.3 1030.0,699.5 C1040.8,713.7 1048.8,732.8 1055.0,749.5 C1061.2,766.2 1066.2,782.8 1067.5,799.5 C1068.8,816.2 1067.1,835.3 1062.5,849.5 C1057.9,863.7 1050.4,874.5 1040.0,884.5 C1029.6,894.5 1016.7,904.5 1000.0,909.5 C983.3,914.5 960.0,915.3 940.0,914.5 C920.0,913.7 897.5,911.2 880.0,904.5 C862.5,897.8 847.5,887.0 835.0,874.5 C822.5,862.0 811.5,846.2 805.0,829.5 C798.5,812.8 796.0,791.2 796.0,774.5 C796.0,757.8 799.3,743.7 805.0,729.5 C810.7,715.3 819.2,701.2 830.0,689.5 C840.8,677.8 854.2,667.0 870.0,659.5 C885.8,652.0 905.0,643.7 925.0,644.5 Z" fill="#ffc080"/><path d="M1150.0,774.5 C1167.5,774.5 1200.0,777.8 1220.0,784.5 C1240.0,791.2 1257.5,802.0 1270.0,814.5 C1282.5,827.0 1290.4,843.7 1295.0,859.5 C1299.6,875.3 1299.2,893.7 1297.5,909.5 C1295.8,925.3 1291.2,941.2 1285.0,954.5 C1278.8,967.8 1270.8,979.5 1260.0,989.5 C1249.2,999.5 1235.8,1007.8 1220.0,1014.5 C1204.2,1021.2 1182.5,1027.0 1165.0,1029.5 C1147.5,1032.0 1129.2,1033.7 1115.0,1029.5 C1100.8,1025.3 1090.0,1014.5 1080.0,1004.5 C1070.0,994.5 1059.6,983.7 1055.0,969.5 C1050.4,955.3 1051.2,937.8 1052.5,919.5 C1053.8,901.2 1057.1,877.0 1062.5,859.5 C1067.9,842.0 1076.2,827.0 1085.0,814.5 C1093.8,802.0 1104.2,791.2 1115.0,784.5 C1125.8,777.8 1132.5,774.5 1150.0,774.5 Z" fill="#ffc080"/><path d="M1463.8,961.8 C1484.6,959.7 1537.5,958.7 1558.7,960.6 C1579.9,962.5 1580.4,966.9 1591.2,973.1 C1602.0,979.4 1615.2,992.1 1623.7,998.1 C1632.2,1004.1 1640.1,1003.0 1642.4,1009.3 C1644.7,1015.5 1638.2,1025.0 1637.4,1035.6 C1636.6,1046.2 1638.0,1060.5 1637.4,1073.0 C1636.8,1085.5 1636.8,1098.0 1633.7,1110.5 C1630.6,1123.0 1625.0,1135.5 1618.7,1148.0 C1612.5,1160.5 1604.5,1174.2 1596.2,1185.5 C1587.9,1196.8 1577.9,1207.2 1568.7,1215.5 C1559.5,1223.8 1558.7,1232.2 1541.2,1235.5 C1523.7,1238.8 1480.9,1238.0 1463.8,1235.5 C1446.7,1233.0 1448.0,1227.6 1438.8,1220.5 C1429.6,1213.4 1418.4,1202.2 1408.8,1193.0 C1399.2,1183.8 1388.6,1175.1 1381.3,1165.5 C1374.0,1155.9 1368.1,1146.8 1365.0,1135.5 C1361.9,1124.2 1362.7,1112.6 1362.5,1098.0 C1362.3,1083.4 1361.5,1059.2 1363.8,1048.0 C1366.1,1036.8 1370.0,1038.9 1376.3,1030.6 C1382.5,1022.3 1391.7,1007.7 1401.3,998.1 C1410.9,988.5 1423.4,979.2 1433.8,973.1 C1444.2,967.0 1443.0,963.9 1463.8,961.8 Z" fill="#ffc080"/><path d="M1185.0,564.5 C1185.8,555.3 1188.3,538.7 1195.0,524.5 C1201.7,510.3 1213.3,492.8 1225.0,479.5 C1236.7,466.2 1251.7,453.7 1265.0,444.5 C1278.3,435.3 1294.2,426.2 1305.0,424.5 C1315.8,422.8 1322.5,429.5 1330.0,434.5 C1337.5,439.5 1343.3,458.7 1350.0,454.5 C1356.7,450.3 1359.2,418.2 1370.0,409.5 C1380.8,400.8 1399.2,402.0 1415.0,402.0 C1430.8,402.0 1450.0,405.3 1465.0,409.5 C1480.0,413.7 1492.5,425.3 1505.0,427.0 C1517.5,428.7 1525.8,418.2 1540.0,419.5 C1554.2,420.8 1573.3,427.0 1590.0,434.5 C1606.7,442.0 1624.2,456.2 1640.0,464.5 C1655.8,472.8 1675.4,474.5 1685.0,484.5 C1694.6,494.5 1695.8,512.0 1697.5,524.5 C1699.2,537.0 1699.6,550.3 1695.0,559.5 C1690.4,568.7 1682.5,574.9 1670.0,579.5 C1657.5,584.1 1631.7,584.5 1620.0,587.0 C1608.3,589.5 1598.3,589.9 1600.0,594.5 C1601.7,599.1 1623.3,607.0 1630.0,614.5 C1636.7,622.0 1642.5,632.0 1640.0,639.5 C1637.5,647.0 1622.5,654.5 1615.0,659.5 C1607.5,664.5 1597.5,665.3 1595.0,669.5 C1592.5,673.7 1592.5,680.3 1600.0,684.5 C1607.5,688.7 1625.8,690.3 1640.0,694.5 C1654.2,698.7 1676.7,698.7 1685.0,709.5 C1693.3,720.3 1691.7,746.2 1690.0,759.5 C1688.3,772.8 1683.3,778.7 1675.0,789.5 C1666.7,800.3 1654.2,815.3 1640.0,824.5 C1625.8,833.7 1606.7,839.5 1590.0,844.5 C1573.3,849.5 1554.2,854.5 1540.0,854.5 C1525.8,854.5 1515.0,851.2 1505.0,844.5 C1495.0,837.8 1485.8,816.2 1480.0,814.5 C1474.2,812.8 1476.7,827.0 1470.0,834.5 C1463.3,842.0 1451.7,853.7 1440.0,859.5 C1428.3,865.3 1416.7,869.5 1400.0,869.5 C1383.3,869.5 1358.3,864.5 1340.0,859.5 C1321.7,854.5 1305.0,847.8 1290.0,839.5 C1275.0,831.2 1262.5,819.5 1250.0,809.5 C1237.5,799.5 1225.8,791.2 1215.0,779.5 C1204.2,767.8 1192.5,752.8 1185.0,739.5 C1177.5,726.2 1171.7,712.8 1170.0,699.5 C1168.3,686.2 1166.7,669.5 1175.0,659.5 C1183.3,649.5 1202.5,643.7 1220.0,639.5 C1237.5,635.3 1261.7,633.7 1280.0,634.5 C1298.3,635.3 1316.7,641.2 1330.0,644.5 C1343.3,647.8 1352.9,658.7 1360.0,654.5 C1367.1,650.3 1375.8,627.4 1372.5,619.5 C1369.2,611.6 1357.1,609.5 1340.0,607.0 C1322.9,604.5 1290.8,605.8 1270.0,604.5 C1249.2,603.2 1228.3,603.7 1215.0,599.5 C1201.7,595.3 1195.0,585.3 1190.0,579.5 C1185.0,573.7 1184.2,573.7 1185.0,564.5 Z" fill="#90f090" filter="url(#lump)"/></g></g><g id="img1t"><rect width="1818" height="1370" fill="url(#bgG)"/><rect width="1818" height="1370" fill="#000" filter="url(#nz)"/><g filter="url(#shd)" fill="#10151c" opacity="0.72" transform="translate(13,11)"><path d="M448.5,285.7 C460.8,285.1 481.5,285.6 495.5,289.0 C509.5,292.4 521.3,297.9 532.5,305.8 C543.7,313.7 554.7,324.9 562.8,336.1 C570.9,347.3 577.9,359.0 581.3,373.0 C584.7,387.0 584.4,404.4 583.0,420.1 C581.6,435.8 578.5,452.5 572.9,467.1 C567.3,481.7 559.4,495.2 549.3,507.5 C539.2,519.8 525.7,533.3 512.3,541.1 C498.9,548.9 483.2,552.8 468.7,554.5 C454.1,556.2 439.6,555.1 425.0,551.2 C410.4,547.3 394.2,539.4 381.3,531.0 C368.4,522.6 356.7,512.0 347.7,500.8 C338.7,489.6 332.0,476.3 327.5,464.0 C323.0,451.7 320.2,440.5 320.8,427.0 C321.4,413.5 325.3,398.2 330.9,383.1 C336.5,368.0 344.9,349.0 354.4,336.1 C363.9,323.2 376.8,313.1 388.0,305.8 C399.2,298.5 411.5,295.8 421.6,292.4 C431.7,289.0 436.2,286.3 448.5,285.7 Z"/><path d="M925.0,644.5 C945.0,645.3 972.5,655.3 990.0,664.5 C1007.5,673.7 1019.2,685.3 1030.0,699.5 C1040.8,713.7 1048.8,732.8 1055.0,749.5 C1061.2,766.2 1066.2,782.8 1067.5,799.5 C1068.8,816.2 1067.1,835.3 1062.5,849.5 C1057.9,863.7 1050.4,874.5 1040.0,884.5 C1029.6,894.5 1016.7,904.5 1000.0,909.5 C983.3,914.5 960.0,915.3 940.0,914.5 C920.0,913.7 897.5,911.2 880.0,904.5 C862.5,897.8 847.5,887.0 835.0,874.5 C822.5,862.0 811.5,846.2 805.0,829.5 C798.5,812.8 796.0,791.2 796.0,774.5 C796.0,757.8 799.3,743.7 805.0,729.5 C810.7,715.3 819.2,701.2 830.0,689.5 C840.8,677.8 854.2,667.0 870.0,659.5 C885.8,652.0 905.0,643.7 925.0,644.5 Z"/><path d="M1150.0,774.5 C1167.5,774.5 1200.0,777.8 1220.0,784.5 C1240.0,791.2 1257.5,802.0 1270.0,814.5 C1282.5,827.0 1290.4,843.7 1295.0,859.5 C1299.6,875.3 1299.2,893.7 1297.5,909.5 C1295.8,925.3 1291.2,941.2 1285.0,954.5 C1278.8,967.8 1270.8,979.5 1260.0,989.5 C1249.2,999.5 1235.8,1007.8 1220.0,1014.5 C1204.2,1021.2 1182.5,1027.0 1165.0,1029.5 C1147.5,1032.0 1129.2,1033.7 1115.0,1029.5 C1100.8,1025.3 1090.0,1014.5 1080.0,1004.5 C1070.0,994.5 1059.6,983.7 1055.0,969.5 C1050.4,955.3 1051.2,937.8 1052.5,919.5 C1053.8,901.2 1057.1,877.0 1062.5,859.5 C1067.9,842.0 1076.2,827.0 1085.0,814.5 C1093.8,802.0 1104.2,791.2 1115.0,784.5 C1125.8,777.8 1132.5,774.5 1150.0,774.5 Z"/><path d="M1463.8,961.8 C1484.6,959.7 1537.5,958.7 1558.7,960.6 C1579.9,962.5 1580.4,966.9 1591.2,973.1 C1602.0,979.4 1615.2,992.1 1623.7,998.1 C1632.2,1004.1 1640.1,1003.0 1642.4,1009.3 C1644.7,1015.5 1638.2,1025.0 1637.4,1035.6 C1636.6,1046.2 1638.0,1060.5 1637.4,1073.0 C1636.8,1085.5 1636.8,1098.0 1633.7,1110.5 C1630.6,1123.0 1625.0,1135.5 1618.7,1148.0 C1612.5,1160.5 1604.5,1174.2 1596.2,1185.5 C1587.9,1196.8 1577.9,1207.2 1568.7,1215.5 C1559.5,1223.8 1558.7,1232.2 1541.2,1235.5 C1523.7,1238.8 1480.9,1238.0 1463.8,1235.5 C1446.7,1233.0 1448.0,1227.6 1438.8,1220.5 C1429.6,1213.4 1418.4,1202.2 1408.8,1193.0 C1399.2,1183.8 1388.6,1175.1 1381.3,1165.5 C1374.0,1155.9 1368.1,1146.8 1365.0,1135.5 C1361.9,1124.2 1362.7,1112.6 1362.5,1098.0 C1362.3,1083.4 1361.5,1059.2 1363.8,1048.0 C1366.1,1036.8 1370.0,1038.9 1376.3,1030.6 C1382.5,1022.3 1391.7,1007.7 1401.3,998.1 C1410.9,988.5 1423.4,979.2 1433.8,973.1 C1444.2,967.0 1443.0,963.9 1463.8,961.8 Z"/><path d="M585.5,397.2 C587.8,386.0 593.0,364.6 599.5,352.5 C606.0,340.4 615.8,333.5 624.6,324.6 C633.4,315.8 642.3,307.8 652.5,299.4 C662.7,291.0 674.8,281.3 686.0,274.3 C697.2,267.3 707.5,262.1 719.6,257.5 C731.7,252.8 745.2,248.5 758.7,246.4 C772.2,244.3 786.5,244.5 800.5,245.0 C814.5,245.5 829.8,246.2 842.4,249.2 C855.0,252.2 864.7,257.1 875.9,263.1 C887.1,269.2 899.2,277.1 909.5,285.5 C919.8,293.9 929.0,303.6 937.4,313.4 C945.8,323.2 953.2,332.9 959.7,344.1 C966.2,355.3 972.5,367.8 976.5,380.4 C980.5,393.0 982.6,405.5 983.5,419.5 C984.4,433.5 983.7,449.3 982.1,464.2 C980.5,479.1 977.4,495.9 973.7,508.9 C970.0,521.9 965.3,531.7 959.7,542.4 C954.1,553.1 947.2,565.6 940.2,573.1 C933.2,580.6 926.2,585.2 917.8,587.1 C909.4,589.0 897.8,587.1 889.9,584.3 C882.0,581.5 876.0,577.8 870.4,570.3 C864.8,562.8 860.6,550.3 856.4,539.6 C852.2,528.9 849.9,517.3 845.2,506.1 C840.6,494.9 834.5,482.4 828.5,472.6 C822.5,462.8 815.9,454.4 808.9,447.4 C801.9,440.4 795.0,434.9 786.6,430.7 C778.2,426.5 769.0,424.2 758.7,422.3 C748.5,420.4 736.8,419.3 725.1,419.5 C713.5,419.7 698.1,420.4 688.8,423.7 C679.5,427.0 676.8,435.2 669.3,439.1 C661.8,443.1 653.0,445.5 644.1,447.4 C635.2,449.2 624.6,451.1 616.2,450.2 C607.8,449.3 599.0,447.0 593.9,441.9 C588.8,436.8 586.9,426.9 585.5,419.5 C584.1,412.1 583.2,408.4 585.5,397.2 Z"/><path d="M162.9,601.7 C162.9,589.3 165.2,578.6 169.7,567.9 C174.2,557.2 180.9,544.5 189.9,537.5 C198.9,530.5 211.3,528.2 223.7,525.7 C236.1,523.2 250.8,521.8 264.3,522.3 C277.8,522.8 291.9,525.4 304.9,529.0 C317.8,532.6 330.2,537.7 342.0,544.2 C353.8,550.7 365.7,558.9 375.8,567.9 C385.9,576.9 395.0,587.6 402.9,598.3 C410.8,609.0 417.6,620.3 423.2,632.1 C428.8,643.9 433.9,656.3 436.7,669.3 C439.5,682.3 440.1,695.2 440.1,709.9 C440.1,724.5 439.5,741.4 436.7,757.2 C433.9,773.0 429.4,789.3 423.2,804.5 C417.0,819.7 408.5,834.9 399.5,848.4 C390.5,861.9 380.9,874.3 369.1,885.6 C357.3,896.9 343.1,908.1 328.5,916.0 C313.9,923.9 297.5,929.6 281.2,933.0 C264.9,936.4 245.2,937.4 230.5,936.3 C215.8,935.2 202.9,931.8 193.3,926.2 C183.7,920.6 176.4,912.6 173.0,902.5 C169.6,892.4 170.2,875.4 173.0,865.3 C175.8,855.2 182.0,849.6 189.9,841.7 C197.8,833.8 210.8,825.9 220.4,818.0 C230.0,810.1 240.7,802.9 247.4,794.4 C254.2,785.9 258.6,778.0 260.9,767.3 C263.1,756.6 262.6,740.8 260.9,730.1 C259.2,719.4 256.4,711.0 250.8,703.1 C245.2,695.2 236.7,689.6 227.1,682.8 C217.5,676.0 202.9,669.2 193.3,662.5 C183.7,655.8 174.8,652.4 169.7,642.3 C164.6,632.2 162.9,614.1 162.9,601.7 Z"/><path d="M461.0,1031.0 C460.0,1021.7 463.7,1011.3 468.0,1001.0 C472.3,990.7 479.5,978.5 487.0,969.0 C494.5,959.5 503.2,949.0 513.0,944.0 C522.8,939.0 534.0,939.5 546.0,939.0 C558.0,938.5 573.0,938.8 585.0,941.0 C597.0,943.2 608.2,947.3 618.0,952.0 C627.8,956.7 635.3,961.8 644.0,969.0 C652.7,976.2 662.5,985.3 670.0,995.0 C677.5,1004.7 683.0,1015.0 689.0,1027.0 C695.0,1039.0 702.3,1053.8 706.0,1067.0 C709.7,1080.2 710.5,1093.0 711.0,1106.0 C711.5,1119.0 711.0,1132.0 709.0,1145.0 C707.0,1158.0 703.3,1172.0 699.0,1184.0 C694.7,1196.0 689.0,1207.2 683.0,1217.0 C677.0,1226.8 669.5,1237.7 663.0,1243.0 C656.5,1248.3 651.0,1249.0 644.0,1249.0 C637.0,1249.0 628.2,1248.3 621.0,1243.0 C613.8,1237.7 607.0,1227.3 601.0,1217.0 C595.0,1206.7 589.8,1194.7 585.0,1181.0 C580.2,1167.3 576.8,1147.5 572.0,1135.0 C567.2,1122.5 563.0,1114.2 556.0,1106.0 C549.0,1097.8 539.8,1091.5 530.0,1086.0 C520.2,1080.5 506.3,1077.8 497.0,1073.0 C487.7,1068.2 480.0,1064.0 474.0,1057.0 C468.0,1050.0 462.0,1040.3 461.0,1031.0 Z"/><path d="M712.0,1200.0 C713.0,1187.0 717.0,1171.5 722.0,1158.0 C727.0,1144.5 734.3,1131.0 742.0,1119.0 C749.7,1107.0 758.3,1095.8 768.0,1086.0 C777.7,1076.2 788.0,1067.7 800.0,1060.0 C812.0,1052.3 828.0,1044.0 840.0,1040.0 C852.0,1036.0 860.2,1036.0 872.0,1036.0 C883.8,1036.0 897.8,1037.0 911.0,1040.0 C924.2,1043.0 937.8,1048.5 951.0,1054.0 C964.2,1059.5 978.2,1065.5 990.0,1073.0 C1001.8,1080.5 1011.7,1089.7 1022.0,1099.0 C1032.3,1108.3 1043.8,1118.7 1052.0,1129.0 C1060.2,1139.3 1065.8,1149.2 1071.0,1161.0 C1076.2,1172.8 1080.8,1187.5 1083.0,1200.0 C1085.2,1212.5 1084.7,1224.5 1084.0,1236.0 C1083.3,1247.5 1082.2,1260.8 1079.0,1269.0 C1075.8,1277.2 1070.2,1282.8 1065.0,1285.0 C1059.8,1287.2 1054.5,1283.7 1048.0,1282.0 C1041.5,1280.3 1034.7,1275.5 1026.0,1275.0 C1017.3,1274.5 1004.2,1282.2 996.0,1279.0 C987.8,1275.8 983.5,1264.2 977.0,1256.0 C970.5,1247.8 964.7,1237.7 957.0,1230.0 C949.3,1222.3 940.8,1214.3 931.0,1210.0 C921.2,1205.7 908.3,1205.0 898.0,1204.0 C887.7,1203.0 877.7,1201.8 869.0,1204.0 C860.3,1206.2 852.5,1210.5 846.0,1217.0 C839.5,1223.5 835.5,1234.8 830.0,1243.0 C824.5,1251.2 820.2,1260.0 813.0,1266.0 C805.8,1272.0 796.7,1276.7 787.0,1279.0 C777.3,1281.3 764.2,1282.2 755.0,1280.0 C745.8,1277.8 738.5,1273.3 732.0,1266.0 C725.5,1258.7 719.3,1247.0 716.0,1236.0 C712.7,1225.0 711.0,1213.0 712.0,1200.0 Z"/><path d="M1185.0,564.5 C1185.8,555.3 1188.3,538.7 1195.0,524.5 C1201.7,510.3 1213.3,492.8 1225.0,479.5 C1236.7,466.2 1251.7,453.7 1265.0,444.5 C1278.3,435.3 1294.2,426.2 1305.0,424.5 C1315.8,422.8 1322.5,429.5 1330.0,434.5 C1337.5,439.5 1343.3,458.7 1350.0,454.5 C1356.7,450.3 1359.2,418.2 1370.0,409.5 C1380.8,400.8 1399.2,402.0 1415.0,402.0 C1430.8,402.0 1450.0,405.3 1465.0,409.5 C1480.0,413.7 1492.5,425.3 1505.0,427.0 C1517.5,428.7 1525.8,418.2 1540.0,419.5 C1554.2,420.8 1573.3,427.0 1590.0,434.5 C1606.7,442.0 1624.2,456.2 1640.0,464.5 C1655.8,472.8 1675.4,474.5 1685.0,484.5 C1694.6,494.5 1695.8,512.0 1697.5,524.5 C1699.2,537.0 1699.6,550.3 1695.0,559.5 C1690.4,568.7 1682.5,574.9 1670.0,579.5 C1657.5,584.1 1631.7,584.5 1620.0,587.0 C1608.3,589.5 1598.3,589.9 1600.0,594.5 C1601.7,599.1 1623.3,607.0 1630.0,614.5 C1636.7,622.0 1642.5,632.0 1640.0,639.5 C1637.5,647.0 1622.5,654.5 1615.0,659.5 C1607.5,664.5 1597.5,665.3 1595.0,669.5 C1592.5,673.7 1592.5,680.3 1600.0,684.5 C1607.5,688.7 1625.8,690.3 1640.0,694.5 C1654.2,698.7 1676.7,698.7 1685.0,709.5 C1693.3,720.3 1691.7,746.2 1690.0,759.5 C1688.3,772.8 1683.3,778.7 1675.0,789.5 C1666.7,800.3 1654.2,815.3 1640.0,824.5 C1625.8,833.7 1606.7,839.5 1590.0,844.5 C1573.3,849.5 1554.2,854.5 1540.0,854.5 C1525.8,854.5 1515.0,851.2 1505.0,844.5 C1495.0,837.8 1485.8,816.2 1480.0,814.5 C1474.2,812.8 1476.7,827.0 1470.0,834.5 C1463.3,842.0 1451.7,853.7 1440.0,859.5 C1428.3,865.3 1416.7,869.5 1400.0,869.5 C1383.3,869.5 1358.3,864.5 1340.0,859.5 C1321.7,854.5 1305.0,847.8 1290.0,839.5 C1275.0,831.2 1262.5,819.5 1250.0,809.5 C1237.5,799.5 1225.8,791.2 1215.0,779.5 C1204.2,767.8 1192.5,752.8 1185.0,739.5 C1177.5,726.2 1171.7,712.8 1170.0,699.5 C1168.3,686.2 1166.7,669.5 1175.0,659.5 C1183.3,649.5 1202.5,643.7 1220.0,639.5 C1237.5,635.3 1261.7,633.7 1280.0,634.5 C1298.3,635.3 1316.7,641.2 1330.0,644.5 C1343.3,647.8 1352.9,658.7 1360.0,654.5 C1367.1,650.3 1375.8,627.4 1372.5,619.5 C1369.2,611.6 1357.1,609.5 1340.0,607.0 C1322.9,604.5 1290.8,605.8 1270.0,604.5 C1249.2,603.2 1228.3,603.7 1215.0,599.5 C1201.7,595.3 1195.0,585.3 1190.0,579.5 C1185.0,573.7 1184.2,573.7 1185.0,564.5 Z"/></g><path d="M448.5,285.7 C460.8,285.1 481.5,285.6 495.5,289.0 C509.5,292.4 521.3,297.9 532.5,305.8 C543.7,313.7 554.7,324.9 562.8,336.1 C570.9,347.3 577.9,359.0 581.3,373.0 C584.7,387.0 584.4,404.4 583.0,420.1 C581.6,435.8 578.5,452.5 572.9,467.1 C567.3,481.7 559.4,495.2 549.3,507.5 C539.2,519.8 525.7,533.3 512.3,541.1 C498.9,548.9 483.2,552.8 468.7,554.5 C454.1,556.2 439.6,555.1 425.0,551.2 C410.4,547.3 394.2,539.4 381.3,531.0 C368.4,522.6 356.7,512.0 347.7,500.8 C338.7,489.6 332.0,476.3 327.5,464.0 C323.0,451.7 320.2,440.5 320.8,427.0 C321.4,413.5 325.3,398.2 330.9,383.1 C336.5,368.0 344.9,349.0 354.4,336.1 C363.9,323.2 376.8,313.1 388.0,305.8 C399.2,298.5 411.5,295.8 421.6,292.4 C431.7,289.0 436.2,286.3 448.5,285.7 Z" fill="#b26a30"/><path d="M925.0,644.5 C945.0,645.3 972.5,655.3 990.0,664.5 C1007.5,673.7 1019.2,685.3 1030.0,699.5 C1040.8,713.7 1048.8,732.8 1055.0,749.5 C1061.2,766.2 1066.2,782.8 1067.5,799.5 C1068.8,816.2 1067.1,835.3 1062.5,849.5 C1057.9,863.7 1050.4,874.5 1040.0,884.5 C1029.6,894.5 1016.7,904.5 1000.0,909.5 C983.3,914.5 960.0,915.3 940.0,914.5 C920.0,913.7 897.5,911.2 880.0,904.5 C862.5,897.8 847.5,887.0 835.0,874.5 C822.5,862.0 811.5,846.2 805.0,829.5 C798.5,812.8 796.0,791.2 796.0,774.5 C796.0,757.8 799.3,743.7 805.0,729.5 C810.7,715.3 819.2,701.2 830.0,689.5 C840.8,677.8 854.2,667.0 870.0,659.5 C885.8,652.0 905.0,643.7 925.0,644.5 Z" fill="#b26a30"/><path d="M1150.0,774.5 C1167.5,774.5 1200.0,777.8 1220.0,784.5 C1240.0,791.2 1257.5,802.0 1270.0,814.5 C1282.5,827.0 1290.4,843.7 1295.0,859.5 C1299.6,875.3 1299.2,893.7 1297.5,909.5 C1295.8,925.3 1291.2,941.2 1285.0,954.5 C1278.8,967.8 1270.8,979.5 1260.0,989.5 C1249.2,999.5 1235.8,1007.8 1220.0,1014.5 C1204.2,1021.2 1182.5,1027.0 1165.0,1029.5 C1147.5,1032.0 1129.2,1033.7 1115.0,1029.5 C1100.8,1025.3 1090.0,1014.5 1080.0,1004.5 C1070.0,994.5 1059.6,983.7 1055.0,969.5 C1050.4,955.3 1051.2,937.8 1052.5,919.5 C1053.8,901.2 1057.1,877.0 1062.5,859.5 C1067.9,842.0 1076.2,827.0 1085.0,814.5 C1093.8,802.0 1104.2,791.2 1115.0,784.5 C1125.8,777.8 1132.5,774.5 1150.0,774.5 Z" fill="#b26a30"/><path d="M1463.8,961.8 C1484.6,959.7 1537.5,958.7 1558.7,960.6 C1579.9,962.5 1580.4,966.9 1591.2,973.1 C1602.0,979.4 1615.2,992.1 1623.7,998.1 C1632.2,1004.1 1640.1,1003.0 1642.4,1009.3 C1644.7,1015.5 1638.2,1025.0 1637.4,1035.6 C1636.6,1046.2 1638.0,1060.5 1637.4,1073.0 C1636.8,1085.5 1636.8,1098.0 1633.7,1110.5 C1630.6,1123.0 1625.0,1135.5 1618.7,1148.0 C1612.5,1160.5 1604.5,1174.2 1596.2,1185.5 C1587.9,1196.8 1577.9,1207.2 1568.7,1215.5 C1559.5,1223.8 1558.7,1232.2 1541.2,1235.5 C1523.7,1238.8 1480.9,1238.0 1463.8,1235.5 C1446.7,1233.0 1448.0,1227.6 1438.8,1220.5 C1429.6,1213.4 1418.4,1202.2 1408.8,1193.0 C1399.2,1183.8 1388.6,1175.1 1381.3,1165.5 C1374.0,1155.9 1368.1,1146.8 1365.0,1135.5 C1361.9,1124.2 1362.7,1112.6 1362.5,1098.0 C1362.3,1083.4 1361.5,1059.2 1363.8,1048.0 C1366.1,1036.8 1370.0,1038.9 1376.3,1030.6 C1382.5,1022.3 1391.7,1007.7 1401.3,998.1 C1410.9,988.5 1423.4,979.2 1433.8,973.1 C1444.2,967.0 1443.0,963.9 1463.8,961.8 Z" fill="#b26a30"/><path d="M585.5,397.2 C587.8,386.0 593.0,364.6 599.5,352.5 C606.0,340.4 615.8,333.5 624.6,324.6 C633.4,315.8 642.3,307.8 652.5,299.4 C662.7,291.0 674.8,281.3 686.0,274.3 C697.2,267.3 707.5,262.1 719.6,257.5 C731.7,252.8 745.2,248.5 758.7,246.4 C772.2,244.3 786.5,244.5 800.5,245.0 C814.5,245.5 829.8,246.2 842.4,249.2 C855.0,252.2 864.7,257.1 875.9,263.1 C887.1,269.2 899.2,277.1 909.5,285.5 C919.8,293.9 929.0,303.6 937.4,313.4 C945.8,323.2 953.2,332.9 959.7,344.1 C966.2,355.3 972.5,367.8 976.5,380.4 C980.5,393.0 982.6,405.5 983.5,419.5 C984.4,433.5 983.7,449.3 982.1,464.2 C980.5,479.1 977.4,495.9 973.7,508.9 C970.0,521.9 965.3,531.7 959.7,542.4 C954.1,553.1 947.2,565.6 940.2,573.1 C933.2,580.6 926.2,585.2 917.8,587.1 C909.4,589.0 897.8,587.1 889.9,584.3 C882.0,581.5 876.0,577.8 870.4,570.3 C864.8,562.8 860.6,550.3 856.4,539.6 C852.2,528.9 849.9,517.3 845.2,506.1 C840.6,494.9 834.5,482.4 828.5,472.6 C822.5,462.8 815.9,454.4 808.9,447.4 C801.9,440.4 795.0,434.9 786.6,430.7 C778.2,426.5 769.0,424.2 758.7,422.3 C748.5,420.4 736.8,419.3 725.1,419.5 C713.5,419.7 698.1,420.4 688.8,423.7 C679.5,427.0 676.8,435.2 669.3,439.1 C661.8,443.1 653.0,445.5 644.1,447.4 C635.2,449.2 624.6,451.1 616.2,450.2 C607.8,449.3 599.0,447.0 593.9,441.9 C588.8,436.8 586.9,426.9 585.5,419.5 C584.1,412.1 583.2,408.4 585.5,397.2 Z" fill="#78bcd2"/><path d="M162.9,601.7 C162.9,589.3 165.2,578.6 169.7,567.9 C174.2,557.2 180.9,544.5 189.9,537.5 C198.9,530.5 211.3,528.2 223.7,525.7 C236.1,523.2 250.8,521.8 264.3,522.3 C277.8,522.8 291.9,525.4 304.9,529.0 C317.8,532.6 330.2,537.7 342.0,544.2 C353.8,550.7 365.7,558.9 375.8,567.9 C385.9,576.9 395.0,587.6 402.9,598.3 C410.8,609.0 417.6,620.3 423.2,632.1 C428.8,643.9 433.9,656.3 436.7,669.3 C439.5,682.3 440.1,695.2 440.1,709.9 C440.1,724.5 439.5,741.4 436.7,757.2 C433.9,773.0 429.4,789.3 423.2,804.5 C417.0,819.7 408.5,834.9 399.5,848.4 C390.5,861.9 380.9,874.3 369.1,885.6 C357.3,896.9 343.1,908.1 328.5,916.0 C313.9,923.9 297.5,929.6 281.2,933.0 C264.9,936.4 245.2,937.4 230.5,936.3 C215.8,935.2 202.9,931.8 193.3,926.2 C183.7,920.6 176.4,912.6 173.0,902.5 C169.6,892.4 170.2,875.4 173.0,865.3 C175.8,855.2 182.0,849.6 189.9,841.7 C197.8,833.8 210.8,825.9 220.4,818.0 C230.0,810.1 240.7,802.9 247.4,794.4 C254.2,785.9 258.6,778.0 260.9,767.3 C263.1,756.6 262.6,740.8 260.9,730.1 C259.2,719.4 256.4,711.0 250.8,703.1 C245.2,695.2 236.7,689.6 227.1,682.8 C217.5,676.0 202.9,669.2 193.3,662.5 C183.7,655.8 174.8,652.4 169.7,642.3 C164.6,632.2 162.9,614.1 162.9,601.7 Z" fill="#78bcd2"/><path d="M461.0,1031.0 C460.0,1021.7 463.7,1011.3 468.0,1001.0 C472.3,990.7 479.5,978.5 487.0,969.0 C494.5,959.5 503.2,949.0 513.0,944.0 C522.8,939.0 534.0,939.5 546.0,939.0 C558.0,938.5 573.0,938.8 585.0,941.0 C597.0,943.2 608.2,947.3 618.0,952.0 C627.8,956.7 635.3,961.8 644.0,969.0 C652.7,976.2 662.5,985.3 670.0,995.0 C677.5,1004.7 683.0,1015.0 689.0,1027.0 C695.0,1039.0 702.3,1053.8 706.0,1067.0 C709.7,1080.2 710.5,1093.0 711.0,1106.0 C711.5,1119.0 711.0,1132.0 709.0,1145.0 C707.0,1158.0 703.3,1172.0 699.0,1184.0 C694.7,1196.0 689.0,1207.2 683.0,1217.0 C677.0,1226.8 669.5,1237.7 663.0,1243.0 C656.5,1248.3 651.0,1249.0 644.0,1249.0 C637.0,1249.0 628.2,1248.3 621.0,1243.0 C613.8,1237.7 607.0,1227.3 601.0,1217.0 C595.0,1206.7 589.8,1194.7 585.0,1181.0 C580.2,1167.3 576.8,1147.5 572.0,1135.0 C567.2,1122.5 563.0,1114.2 556.0,1106.0 C549.0,1097.8 539.8,1091.5 530.0,1086.0 C520.2,1080.5 506.3,1077.8 497.0,1073.0 C487.7,1068.2 480.0,1064.0 474.0,1057.0 C468.0,1050.0 462.0,1040.3 461.0,1031.0 Z" fill="#78bcd2"/><path d="M712.0,1200.0 C713.0,1187.0 717.0,1171.5 722.0,1158.0 C727.0,1144.5 734.3,1131.0 742.0,1119.0 C749.7,1107.0 758.3,1095.8 768.0,1086.0 C777.7,1076.2 788.0,1067.7 800.0,1060.0 C812.0,1052.3 828.0,1044.0 840.0,1040.0 C852.0,1036.0 860.2,1036.0 872.0,1036.0 C883.8,1036.0 897.8,1037.0 911.0,1040.0 C924.2,1043.0 937.8,1048.5 951.0,1054.0 C964.2,1059.5 978.2,1065.5 990.0,1073.0 C1001.8,1080.5 1011.7,1089.7 1022.0,1099.0 C1032.3,1108.3 1043.8,1118.7 1052.0,1129.0 C1060.2,1139.3 1065.8,1149.2 1071.0,1161.0 C1076.2,1172.8 1080.8,1187.5 1083.0,1200.0 C1085.2,1212.5 1084.7,1224.5 1084.0,1236.0 C1083.3,1247.5 1082.2,1260.8 1079.0,1269.0 C1075.8,1277.2 1070.2,1282.8 1065.0,1285.0 C1059.8,1287.2 1054.5,1283.7 1048.0,1282.0 C1041.5,1280.3 1034.7,1275.5 1026.0,1275.0 C1017.3,1274.5 1004.2,1282.2 996.0,1279.0 C987.8,1275.8 983.5,1264.2 977.0,1256.0 C970.5,1247.8 964.7,1237.7 957.0,1230.0 C949.3,1222.3 940.8,1214.3 931.0,1210.0 C921.2,1205.7 908.3,1205.0 898.0,1204.0 C887.7,1203.0 877.7,1201.8 869.0,1204.0 C860.3,1206.2 852.5,1210.5 846.0,1217.0 C839.5,1223.5 835.5,1234.8 830.0,1243.0 C824.5,1251.2 820.2,1260.0 813.0,1266.0 C805.8,1272.0 796.7,1276.7 787.0,1279.0 C777.3,1281.3 764.2,1282.2 755.0,1280.0 C745.8,1277.8 738.5,1273.3 732.0,1266.0 C725.5,1258.7 719.3,1247.0 716.0,1236.0 C712.7,1225.0 711.0,1213.0 712.0,1200.0 Z" fill="#78bcd2"/><path d="M1185.0,564.5 C1185.8,555.3 1188.3,538.7 1195.0,524.5 C1201.7,510.3 1213.3,492.8 1225.0,479.5 C1236.7,466.2 1251.7,453.7 1265.0,444.5 C1278.3,435.3 1294.2,426.2 1305.0,424.5 C1315.8,422.8 1322.5,429.5 1330.0,434.5 C1337.5,439.5 1343.3,458.7 1350.0,454.5 C1356.7,450.3 1359.2,418.2 1370.0,409.5 C1380.8,400.8 1399.2,402.0 1415.0,402.0 C1430.8,402.0 1450.0,405.3 1465.0,409.5 C1480.0,413.7 1492.5,425.3 1505.0,427.0 C1517.5,428.7 1525.8,418.2 1540.0,419.5 C1554.2,420.8 1573.3,427.0 1590.0,434.5 C1606.7,442.0 1624.2,456.2 1640.0,464.5 C1655.8,472.8 1675.4,474.5 1685.0,484.5 C1694.6,494.5 1695.8,512.0 1697.5,524.5 C1699.2,537.0 1699.6,550.3 1695.0,559.5 C1690.4,568.7 1682.5,574.9 1670.0,579.5 C1657.5,584.1 1631.7,584.5 1620.0,587.0 C1608.3,589.5 1598.3,589.9 1600.0,594.5 C1601.7,599.1 1623.3,607.0 1630.0,614.5 C1636.7,622.0 1642.5,632.0 1640.0,639.5 C1637.5,647.0 1622.5,654.5 1615.0,659.5 C1607.5,664.5 1597.5,665.3 1595.0,669.5 C1592.5,673.7 1592.5,680.3 1600.0,684.5 C1607.5,688.7 1625.8,690.3 1640.0,694.5 C1654.2,698.7 1676.7,698.7 1685.0,709.5 C1693.3,720.3 1691.7,746.2 1690.0,759.5 C1688.3,772.8 1683.3,778.7 1675.0,789.5 C1666.7,800.3 1654.2,815.3 1640.0,824.5 C1625.8,833.7 1606.7,839.5 1590.0,844.5 C1573.3,849.5 1554.2,854.5 1540.0,854.5 C1525.8,854.5 1515.0,851.2 1505.0,844.5 C1495.0,837.8 1485.8,816.2 1480.0,814.5 C1474.2,812.8 1476.7,827.0 1470.0,834.5 C1463.3,842.0 1451.7,853.7 1440.0,859.5 C1428.3,865.3 1416.7,869.5 1400.0,869.5 C1383.3,869.5 1358.3,864.5 1340.0,859.5 C1321.7,854.5 1305.0,847.8 1290.0,839.5 C1275.0,831.2 1262.5,819.5 1250.0,809.5 C1237.5,799.5 1225.8,791.2 1215.0,779.5 C1204.2,767.8 1192.5,752.8 1185.0,739.5 C1177.5,726.2 1171.7,712.8 1170.0,699.5 C1168.3,686.2 1166.7,669.5 1175.0,659.5 C1183.3,649.5 1202.5,643.7 1220.0,639.5 C1237.5,635.3 1261.7,633.7 1280.0,634.5 C1298.3,635.3 1316.7,641.2 1330.0,644.5 C1343.3,647.8 1352.9,658.7 1360.0,654.5 C1367.1,650.3 1375.8,627.4 1372.5,619.5 C1369.2,611.6 1357.1,609.5 1340.0,607.0 C1322.9,604.5 1290.8,605.8 1270.0,604.5 C1249.2,603.2 1228.3,603.7 1215.0,599.5 C1201.7,595.3 1195.0,585.3 1190.0,579.5 C1185.0,573.7 1184.2,573.7 1185.0,564.5 Z" fill="#48a84a" filter="url(#lump)"/><g filter="url(#tex)"><path d="M448.5,285.7 C460.8,285.1 481.5,285.6 495.5,289.0 C509.5,292.4 521.3,297.9 532.5,305.8 C543.7,313.7 554.7,324.9 562.8,336.1 C570.9,347.3 577.9,359.0 581.3,373.0 C584.7,387.0 584.4,404.4 583.0,420.1 C581.6,435.8 578.5,452.5 572.9,467.1 C567.3,481.7 559.4,495.2 549.3,507.5 C539.2,519.8 525.7,533.3 512.3,541.1 C498.9,548.9 483.2,552.8 468.7,554.5 C454.1,556.2 439.6,555.1 425.0,551.2 C410.4,547.3 394.2,539.4 381.3,531.0 C368.4,522.6 356.7,512.0 347.7,500.8 C338.7,489.6 332.0,476.3 327.5,464.0 C323.0,451.7 320.2,440.5 320.8,427.0 C321.4,413.5 325.3,398.2 330.9,383.1 C336.5,368.0 344.9,349.0 354.4,336.1 C363.9,323.2 376.8,313.1 388.0,305.8 C399.2,298.5 411.5,295.8 421.6,292.4 C431.7,289.0 436.2,286.3 448.5,285.7 Z" fill="#ffc080"/><path d="M925.0,644.5 C945.0,645.3 972.5,655.3 990.0,664.5 C1007.5,673.7 1019.2,685.3 1030.0,699.5 C1040.8,713.7 1048.8,732.8 1055.0,749.5 C1061.2,766.2 1066.2,782.8 1067.5,799.5 C1068.8,816.2 1067.1,835.3 1062.5,849.5 C1057.9,863.7 1050.4,874.5 1040.0,884.5 C1029.6,894.5 1016.7,904.5 1000.0,909.5 C983.3,914.5 960.0,915.3 940.0,914.5 C920.0,913.7 897.5,911.2 880.0,904.5 C862.5,897.8 847.5,887.0 835.0,874.5 C822.5,862.0 811.5,846.2 805.0,829.5 C798.5,812.8 796.0,791.2 796.0,774.5 C796.0,757.8 799.3,743.7 805.0,729.5 C810.7,715.3 819.2,701.2 830.0,689.5 C840.8,677.8 854.2,667.0 870.0,659.5 C885.8,652.0 905.0,643.7 925.0,644.5 Z" fill="#ffc080"/><path d="M1150.0,774.5 C1167.5,774.5 1200.0,777.8 1220.0,784.5 C1240.0,791.2 1257.5,802.0 1270.0,814.5 C1282.5,827.0 1290.4,843.7 1295.0,859.5 C1299.6,875.3 1299.2,893.7 1297.5,909.5 C1295.8,925.3 1291.2,941.2 1285.0,954.5 C1278.8,967.8 1270.8,979.5 1260.0,989.5 C1249.2,999.5 1235.8,1007.8 1220.0,1014.5 C1204.2,1021.2 1182.5,1027.0 1165.0,1029.5 C1147.5,1032.0 1129.2,1033.7 1115.0,1029.5 C1100.8,1025.3 1090.0,1014.5 1080.0,1004.5 C1070.0,994.5 1059.6,983.7 1055.0,969.5 C1050.4,955.3 1051.2,937.8 1052.5,919.5 C1053.8,901.2 1057.1,877.0 1062.5,859.5 C1067.9,842.0 1076.2,827.0 1085.0,814.5 C1093.8,802.0 1104.2,791.2 1115.0,784.5 C1125.8,777.8 1132.5,774.5 1150.0,774.5 Z" fill="#ffc080"/><path d="M1463.8,961.8 C1484.6,959.7 1537.5,958.7 1558.7,960.6 C1579.9,962.5 1580.4,966.9 1591.2,973.1 C1602.0,979.4 1615.2,992.1 1623.7,998.1 C1632.2,1004.1 1640.1,1003.0 1642.4,1009.3 C1644.7,1015.5 1638.2,1025.0 1637.4,1035.6 C1636.6,1046.2 1638.0,1060.5 1637.4,1073.0 C1636.8,1085.5 1636.8,1098.0 1633.7,1110.5 C1630.6,1123.0 1625.0,1135.5 1618.7,1148.0 C1612.5,1160.5 1604.5,1174.2 1596.2,1185.5 C1587.9,1196.8 1577.9,1207.2 1568.7,1215.5 C1559.5,1223.8 1558.7,1232.2 1541.2,1235.5 C1523.7,1238.8 1480.9,1238.0 1463.8,1235.5 C1446.7,1233.0 1448.0,1227.6 1438.8,1220.5 C1429.6,1213.4 1418.4,1202.2 1408.8,1193.0 C1399.2,1183.8 1388.6,1175.1 1381.3,1165.5 C1374.0,1155.9 1368.1,1146.8 1365.0,1135.5 C1361.9,1124.2 1362.7,1112.6 1362.5,1098.0 C1362.3,1083.4 1361.5,1059.2 1363.8,1048.0 C1366.1,1036.8 1370.0,1038.9 1376.3,1030.6 C1382.5,1022.3 1391.7,1007.7 1401.3,998.1 C1410.9,988.5 1423.4,979.2 1433.8,973.1 C1444.2,967.0 1443.0,963.9 1463.8,961.8 Z" fill="#ffc080"/><path d="M1185.0,564.5 C1185.8,555.3 1188.3,538.7 1195.0,524.5 C1201.7,510.3 1213.3,492.8 1225.0,479.5 C1236.7,466.2 1251.7,453.7 1265.0,444.5 C1278.3,435.3 1294.2,426.2 1305.0,424.5 C1315.8,422.8 1322.5,429.5 1330.0,434.5 C1337.5,439.5 1343.3,458.7 1350.0,454.5 C1356.7,450.3 1359.2,418.2 1370.0,409.5 C1380.8,400.8 1399.2,402.0 1415.0,402.0 C1430.8,402.0 1450.0,405.3 1465.0,409.5 C1480.0,413.7 1492.5,425.3 1505.0,427.0 C1517.5,428.7 1525.8,418.2 1540.0,419.5 C1554.2,420.8 1573.3,427.0 1590.0,434.5 C1606.7,442.0 1624.2,456.2 1640.0,464.5 C1655.8,472.8 1675.4,474.5 1685.0,484.5 C1694.6,494.5 1695.8,512.0 1697.5,524.5 C1699.2,537.0 1699.6,550.3 1695.0,559.5 C1690.4,568.7 1682.5,574.9 1670.0,579.5 C1657.5,584.1 1631.7,584.5 1620.0,587.0 C1608.3,589.5 1598.3,589.9 1600.0,594.5 C1601.7,599.1 1623.3,607.0 1630.0,614.5 C1636.7,622.0 1642.5,632.0 1640.0,639.5 C1637.5,647.0 1622.5,654.5 1615.0,659.5 C1607.5,664.5 1597.5,665.3 1595.0,669.5 C1592.5,673.7 1592.5,680.3 1600.0,684.5 C1607.5,688.7 1625.8,690.3 1640.0,694.5 C1654.2,698.7 1676.7,698.7 1685.0,709.5 C1693.3,720.3 1691.7,746.2 1690.0,759.5 C1688.3,772.8 1683.3,778.7 1675.0,789.5 C1666.7,800.3 1654.2,815.3 1640.0,824.5 C1625.8,833.7 1606.7,839.5 1590.0,844.5 C1573.3,849.5 1554.2,854.5 1540.0,854.5 C1525.8,854.5 1515.0,851.2 1505.0,844.5 C1495.0,837.8 1485.8,816.2 1480.0,814.5 C1474.2,812.8 1476.7,827.0 1470.0,834.5 C1463.3,842.0 1451.7,853.7 1440.0,859.5 C1428.3,865.3 1416.7,869.5 1400.0,869.5 C1383.3,869.5 1358.3,864.5 1340.0,859.5 C1321.7,854.5 1305.0,847.8 1290.0,839.5 C1275.0,831.2 1262.5,819.5 1250.0,809.5 C1237.5,799.5 1225.8,791.2 1215.0,779.5 C1204.2,767.8 1192.5,752.8 1185.0,739.5 C1177.5,726.2 1171.7,712.8 1170.0,699.5 C1168.3,686.2 1166.7,669.5 1175.0,659.5 C1183.3,649.5 1202.5,643.7 1220.0,639.5 C1237.5,635.3 1261.7,633.7 1280.0,634.5 C1298.3,635.3 1316.7,641.2 1330.0,644.5 C1343.3,647.8 1352.9,658.7 1360.0,654.5 C1367.1,650.3 1375.8,627.4 1372.5,619.5 C1369.2,611.6 1357.1,609.5 1340.0,607.0 C1322.9,604.5 1290.8,605.8 1270.0,604.5 C1249.2,603.2 1228.3,603.7 1215.0,599.5 C1201.7,595.3 1195.0,585.3 1190.0,579.5 C1185.0,573.7 1184.2,573.7 1185.0,564.5 Z" fill="#90f090" filter="url(#lump)"/></g></g><g id="img2"><rect width="1818" height="1370" fill="url(#bgG)"/><rect width="1818" height="1370" fill="#000" filter="url(#nz)"/><g filter="url(#shd)" fill="#10151c" opacity="0.72" transform="translate(13,11)"><ellipse cx="665" cy="632" rx="125" ry="130"/><ellipse cx="852" cy="810" rx="130" ry="140"/><ellipse cx="926" cy="1070" rx="132" ry="130"/><path d="M1045.0,1252.0 C1049.5,1239.2 1067.5,1223.0 1085.0,1208.0 C1102.5,1193.0 1134.2,1179.7 1150.0,1162.0 C1165.8,1144.3 1176.3,1119.3 1180.0,1102.0 C1183.7,1084.7 1167.8,1070.8 1172.0,1058.0 C1176.2,1045.2 1190.0,1029.7 1205.0,1025.0 C1220.0,1020.3 1244.2,1022.2 1262.0,1030.0 C1279.8,1037.8 1300.3,1053.3 1312.0,1072.0 C1323.7,1090.7 1332.0,1118.7 1332.0,1142.0 C1332.0,1165.3 1323.7,1192.0 1312.0,1212.0 C1300.3,1232.0 1283.7,1248.7 1262.0,1262.0 C1240.3,1275.3 1208.7,1285.3 1182.0,1292.0 C1155.3,1298.7 1122.7,1303.2 1102.0,1302.0 C1081.3,1300.8 1067.5,1293.3 1058.0,1285.0 C1048.5,1276.7 1040.5,1264.8 1045.0,1252.0 Z"/><path d="M865.0,520.0 C868.3,495.0 869.2,469.2 880.0,450.0 C890.8,430.8 914.2,411.7 930.0,405.0 C945.8,398.3 963.3,400.8 975.0,410.0 C986.7,419.2 989.2,441.7 1000.0,460.0 C1010.8,478.3 1031.7,518.3 1040.0,520.0 C1048.3,521.7 1053.3,490.0 1050.0,470.0 C1046.7,450.0 1018.3,420.0 1020.0,400.0 C1021.7,380.0 1040.0,359.2 1060.0,350.0 C1080.0,340.8 1116.7,338.3 1140.0,345.0 C1163.3,351.7 1187.5,375.8 1200.0,390.0 C1212.5,404.2 1205.0,425.0 1215.0,430.0 C1225.0,435.0 1245.8,413.3 1260.0,420.0 C1274.2,426.7 1286.7,446.7 1300.0,470.0 C1313.3,493.3 1329.2,531.7 1340.0,560.0 C1350.8,588.3 1360.8,613.3 1365.0,640.0 C1369.2,666.7 1370.8,697.5 1365.0,720.0 C1359.2,742.5 1342.5,765.0 1330.0,775.0 C1317.5,785.0 1306.7,785.8 1290.0,780.0 C1273.3,774.2 1243.3,750.0 1230.0,740.0 C1216.7,730.0 1215.0,711.7 1210.0,720.0 C1205.0,728.3 1208.3,766.7 1200.0,790.0 C1191.7,813.3 1176.7,843.3 1160.0,860.0 C1143.3,876.7 1120.0,888.3 1100.0,890.0 C1080.0,891.7 1058.3,881.7 1040.0,870.0 C1021.7,858.3 1003.3,838.3 990.0,820.0 C976.7,801.7 970.0,776.7 960.0,760.0 C950.0,743.3 943.3,733.3 930.0,720.0 C916.7,706.7 891.7,700.0 880.0,680.0 C868.3,660.0 862.5,626.7 860.0,600.0 C857.5,573.3 861.7,545.0 865.0,520.0 Z"/><path d="M150.0,975.0 C151.7,955.0 156.7,932.5 170.0,920.0 C183.3,907.5 213.3,897.5 230.0,900.0 C246.7,902.5 253.3,920.8 270.0,935.0 C286.7,949.2 317.5,980.8 330.0,985.0 C342.5,989.2 351.7,974.2 345.0,960.0 C338.3,945.8 302.5,918.3 290.0,900.0 C277.5,881.7 265.0,866.7 270.0,850.0 C275.0,833.3 298.3,810.0 320.0,800.0 C341.7,790.0 373.3,786.7 400.0,790.0 C426.7,793.3 453.3,808.3 480.0,820.0 C506.7,831.7 535.0,843.3 560.0,860.0 C585.0,876.7 612.5,895.0 630.0,920.0 C647.5,945.0 660.0,978.3 665.0,1010.0 C670.0,1041.7 667.5,1086.7 660.0,1110.0 C652.5,1133.3 636.7,1141.7 620.0,1150.0 C603.3,1158.3 573.3,1153.3 560.0,1160.0 C546.7,1166.7 536.7,1173.3 540.0,1190.0 C543.3,1206.7 580.0,1241.7 580.0,1260.0 C580.0,1278.3 560.0,1291.7 540.0,1300.0 C520.0,1308.3 486.7,1313.3 460.0,1310.0 C433.3,1306.7 406.7,1293.3 380.0,1280.0 C353.3,1266.7 323.3,1248.3 300.0,1230.0 C276.7,1211.7 258.3,1191.7 240.0,1170.0 C221.7,1148.3 203.3,1121.7 190.0,1100.0 C176.7,1078.3 166.7,1060.8 160.0,1040.0 C153.3,1019.2 148.3,995.0 150.0,975.0 Z"/></g><ellipse cx="665" cy="632" rx="125" ry="130" fill="#b26a30"/><ellipse cx="852" cy="810" rx="130" ry="140" fill="#b26a30"/><ellipse cx="926" cy="1070" rx="132" ry="130" fill="#b26a30"/><path d="M1045.0,1252.0 C1049.5,1239.2 1067.5,1223.0 1085.0,1208.0 C1102.5,1193.0 1134.2,1179.7 1150.0,1162.0 C1165.8,1144.3 1176.3,1119.3 1180.0,1102.0 C1183.7,1084.7 1167.8,1070.8 1172.0,1058.0 C1176.2,1045.2 1190.0,1029.7 1205.0,1025.0 C1220.0,1020.3 1244.2,1022.2 1262.0,1030.0 C1279.8,1037.8 1300.3,1053.3 1312.0,1072.0 C1323.7,1090.7 1332.0,1118.7 1332.0,1142.0 C1332.0,1165.3 1323.7,1192.0 1312.0,1212.0 C1300.3,1232.0 1283.7,1248.7 1262.0,1262.0 C1240.3,1275.3 1208.7,1285.3 1182.0,1292.0 C1155.3,1298.7 1122.7,1303.2 1102.0,1302.0 C1081.3,1300.8 1067.5,1293.3 1058.0,1285.0 C1048.5,1276.7 1040.5,1264.8 1045.0,1252.0 Z" fill="#78bcd2"/><path d="M865.0,520.0 C868.3,495.0 869.2,469.2 880.0,450.0 C890.8,430.8 914.2,411.7 930.0,405.0 C945.8,398.3 963.3,400.8 975.0,410.0 C986.7,419.2 989.2,441.7 1000.0,460.0 C1010.8,478.3 1031.7,518.3 1040.0,520.0 C1048.3,521.7 1053.3,490.0 1050.0,470.0 C1046.7,450.0 1018.3,420.0 1020.0,400.0 C1021.7,380.0 1040.0,359.2 1060.0,350.0 C1080.0,340.8 1116.7,338.3 1140.0,345.0 C1163.3,351.7 1187.5,375.8 1200.0,390.0 C1212.5,404.2 1205.0,425.0 1215.0,430.0 C1225.0,435.0 1245.8,413.3 1260.0,420.0 C1274.2,426.7 1286.7,446.7 1300.0,470.0 C1313.3,493.3 1329.2,531.7 1340.0,560.0 C1350.8,588.3 1360.8,613.3 1365.0,640.0 C1369.2,666.7 1370.8,697.5 1365.0,720.0 C1359.2,742.5 1342.5,765.0 1330.0,775.0 C1317.5,785.0 1306.7,785.8 1290.0,780.0 C1273.3,774.2 1243.3,750.0 1230.0,740.0 C1216.7,730.0 1215.0,711.7 1210.0,720.0 C1205.0,728.3 1208.3,766.7 1200.0,790.0 C1191.7,813.3 1176.7,843.3 1160.0,860.0 C1143.3,876.7 1120.0,888.3 1100.0,890.0 C1080.0,891.7 1058.3,881.7 1040.0,870.0 C1021.7,858.3 1003.3,838.3 990.0,820.0 C976.7,801.7 970.0,776.7 960.0,760.0 C950.0,743.3 943.3,733.3 930.0,720.0 C916.7,706.7 891.7,700.0 880.0,680.0 C868.3,660.0 862.5,626.7 860.0,600.0 C857.5,573.3 861.7,545.0 865.0,520.0 Z" fill="#48a84a" filter="url(#lump)"/><path d="M150.0,975.0 C151.7,955.0 156.7,932.5 170.0,920.0 C183.3,907.5 213.3,897.5 230.0,900.0 C246.7,902.5 253.3,920.8 270.0,935.0 C286.7,949.2 317.5,980.8 330.0,985.0 C342.5,989.2 351.7,974.2 345.0,960.0 C338.3,945.8 302.5,918.3 290.0,900.0 C277.5,881.7 265.0,866.7 270.0,850.0 C275.0,833.3 298.3,810.0 320.0,800.0 C341.7,790.0 373.3,786.7 400.0,790.0 C426.7,793.3 453.3,808.3 480.0,820.0 C506.7,831.7 535.0,843.3 560.0,860.0 C585.0,876.7 612.5,895.0 630.0,920.0 C647.5,945.0 660.0,978.3 665.0,1010.0 C670.0,1041.7 667.5,1086.7 660.0,1110.0 C652.5,1133.3 636.7,1141.7 620.0,1150.0 C603.3,1158.3 573.3,1153.3 560.0,1160.0 C546.7,1166.7 536.7,1173.3 540.0,1190.0 C543.3,1206.7 580.0,1241.7 580.0,1260.0 C580.0,1278.3 560.0,1291.7 540.0,1300.0 C520.0,1308.3 486.7,1313.3 460.0,1310.0 C433.3,1306.7 406.7,1293.3 380.0,1280.0 C353.3,1266.7 323.3,1248.3 300.0,1230.0 C276.7,1211.7 258.3,1191.7 240.0,1170.0 C221.7,1148.3 203.3,1121.7 190.0,1100.0 C176.7,1078.3 166.7,1060.8 160.0,1040.0 C153.3,1019.2 148.3,995.0 150.0,975.0 Z" fill="#48a84a" filter="url(#lump)"/><g filter="url(#tex)"><ellipse cx="665" cy="632" rx="125" ry="130" fill="#ffc080"/><ellipse cx="852" cy="810" rx="130" ry="140" fill="#ffc080"/><ellipse cx="926" cy="1070" rx="132" ry="130" fill="#ffc080"/><path d="M865.0,520.0 C868.3,495.0 869.2,469.2 880.0,450.0 C890.8,430.8 914.2,411.7 930.0,405.0 C945.8,398.3 963.3,400.8 975.0,410.0 C986.7,419.2 989.2,441.7 1000.0,460.0 C1010.8,478.3 1031.7,518.3 1040.0,520.0 C1048.3,521.7 1053.3,490.0 1050.0,470.0 C1046.7,450.0 1018.3,420.0 1020.0,400.0 C1021.7,380.0 1040.0,359.2 1060.0,350.0 C1080.0,340.8 1116.7,338.3 1140.0,345.0 C1163.3,351.7 1187.5,375.8 1200.0,390.0 C1212.5,404.2 1205.0,425.0 1215.0,430.0 C1225.0,435.0 1245.8,413.3 1260.0,420.0 C1274.2,426.7 1286.7,446.7 1300.0,470.0 C1313.3,493.3 1329.2,531.7 1340.0,560.0 C1350.8,588.3 1360.8,613.3 1365.0,640.0 C1369.2,666.7 1370.8,697.5 1365.0,720.0 C1359.2,742.5 1342.5,765.0 1330.0,775.0 C1317.5,785.0 1306.7,785.8 1290.0,780.0 C1273.3,774.2 1243.3,750.0 1230.0,740.0 C1216.7,730.0 1215.0,711.7 1210.0,720.0 C1205.0,728.3 1208.3,766.7 1200.0,790.0 C1191.7,813.3 1176.7,843.3 1160.0,860.0 C1143.3,876.7 1120.0,888.3 1100.0,890.0 C1080.0,891.7 1058.3,881.7 1040.0,870.0 C1021.7,858.3 1003.3,838.3 990.0,820.0 C976.7,801.7 970.0,776.7 960.0,760.0 C950.0,743.3 943.3,733.3 930.0,720.0 C916.7,706.7 891.7,700.0 880.0,680.0 C868.3,660.0 862.5,626.7 860.0,600.0 C857.5,573.3 861.7,545.0 865.0,520.0 Z" fill="#90f090" filter="url(#lump)"/><path d="M150.0,975.0 C151.7,955.0 156.7,932.5 170.0,920.0 C183.3,907.5 213.3,897.5 230.0,900.0 C246.7,902.5 253.3,920.8 270.0,935.0 C286.7,949.2 317.5,980.8 330.0,985.0 C342.5,989.2 351.7,974.2 345.0,960.0 C338.3,945.8 302.5,918.3 290.0,900.0 C277.5,881.7 265.0,866.7 270.0,850.0 C275.0,833.3 298.3,810.0 320.0,800.0 C341.7,790.0 373.3,786.7 400.0,790.0 C426.7,793.3 453.3,808.3 480.0,820.0 C506.7,831.7 535.0,843.3 560.0,860.0 C585.0,876.7 612.5,895.0 630.0,920.0 C647.5,945.0 660.0,978.3 665.0,1010.0 C670.0,1041.7 667.5,1086.7 660.0,1110.0 C652.5,1133.3 636.7,1141.7 620.0,1150.0 C603.3,1158.3 573.3,1153.3 560.0,1160.0 C546.7,1166.7 536.7,1173.3 540.0,1190.0 C543.3,1206.7 580.0,1241.7 580.0,1260.0 C580.0,1278.3 560.0,1291.7 540.0,1300.0 C520.0,1308.3 486.7,1313.3 460.0,1310.0 C433.3,1306.7 406.7,1293.3 380.0,1280.0 C353.3,1266.7 323.3,1248.3 300.0,1230.0 C276.7,1211.7 258.3,1191.7 240.0,1170.0 C221.7,1148.3 203.3,1121.7 190.0,1100.0 C176.7,1078.3 166.7,1060.8 160.0,1040.0 C153.3,1019.2 148.3,995.0 150.0,975.0 Z" fill="#90f090" filter="url(#lump)"/></g></g><g id="img3"><rect width="1818" height="1370" fill="url(#bgG)"/><rect width="1818" height="1370" fill="#000" filter="url(#nz)"/><g filter="url(#shd)" fill="#10151c" opacity="0.72" transform="translate(13,11)"><ellipse cx="360" cy="891" rx="133" ry="125"/><ellipse cx="1270" cy="938" rx="137" ry="133"/><path d="M783.0,341.3 C779.9,322.3 779.9,289.1 786.8,265.4 C793.8,241.7 807.4,218.0 824.8,199.1 C842.1,180.1 867.4,161.2 891.1,151.7 C914.8,142.2 941.7,139.0 967.0,142.2 C992.2,145.4 1020.7,158.0 1042.8,170.6 C1064.9,183.3 1084.7,199.1 1099.7,218.0 C1114.7,237.0 1128.1,262.3 1132.9,284.4 C1137.6,306.5 1133.6,335.0 1128.1,350.8 C1122.6,366.6 1112.3,376.0 1099.7,379.2 C1087.0,382.4 1066.5,377.6 1052.3,369.7 C1038.1,361.8 1028.6,342.1 1014.4,331.8 C1000.1,321.5 984.3,312.0 967.0,308.1 C949.6,304.1 925.9,304.1 910.1,308.1 C894.3,312.0 883.2,321.5 872.2,331.8 C861.1,342.1 854.8,361.8 843.7,369.7 C832.7,377.6 815.9,383.9 805.8,379.2 C795.7,374.5 786.2,360.2 783.0,341.3 Z"/><path d="M1164.1,1185.0 C1170.5,1162.9 1192.6,1158.1 1213.4,1147.1 C1234.3,1136.0 1265.6,1131.3 1289.3,1118.6 C1313.0,1106.0 1336.7,1088.6 1355.6,1071.2 C1374.6,1053.9 1390.4,1031.7 1403.0,1014.4 C1415.7,997.0 1418.8,976.4 1431.5,967.0 C1444.1,957.5 1463.1,951.2 1478.9,957.5 C1494.7,963.8 1514.4,982.8 1526.3,1004.9 C1538.1,1027.0 1546.8,1060.2 1550.0,1090.2 C1553.1,1120.2 1550.8,1153.4 1545.2,1185.0 C1539.7,1216.6 1578.4,1264.0 1516.8,1279.8 C1455.2,1295.6 1234.3,1295.6 1175.5,1279.8 C1116.7,1264.0 1157.8,1207.1 1164.1,1185.0 Z"/><path d="M199.1,502.4 C204.6,467.7 213.3,428.2 227.5,398.2 C241.7,368.1 262.3,346.0 284.4,322.3 C306.5,298.6 333.4,275.7 360.2,256.0 C387.1,236.2 421.9,211.7 445.6,203.8 C469.3,195.9 489.8,198.3 502.4,208.6 C515.1,218.8 521.4,241.7 521.4,265.4 C521.4,289.1 510.3,330.2 502.4,350.8 C494.5,371.3 472.4,393.4 474.0,388.7 C475.6,383.9 494.5,340.5 511.9,322.3 C529.3,304.1 556.2,284.4 578.3,279.7 C600.4,274.9 627.3,280.4 644.6,293.9 C662.0,307.3 675.4,333.4 682.6,360.2 C689.7,387.1 690.5,421.9 687.3,455.0 C684.1,488.2 673.9,527.7 663.6,559.3 C653.3,590.9 644.6,619.4 625.7,644.6 C606.7,669.9 578.3,695.2 549.8,711.0 C521.4,726.8 478.7,741.0 455.0,739.4 C431.3,737.9 420.3,715.7 407.6,701.5 C395.0,687.3 388.7,668.3 379.2,654.1 C369.7,639.9 360.2,613.0 350.8,616.2 C341.3,619.4 335.0,658.9 322.3,673.1 C309.7,687.3 292.3,699.9 274.9,701.5 C257.5,703.1 231.5,698.4 218.0,682.6 C204.6,666.8 197.5,636.7 194.3,606.7 C191.2,576.7 193.5,537.2 199.1,502.4 Z"/><path d="M734.7,616.2 C733.1,592.5 740.2,553.0 748.9,530.9 C757.6,508.8 769.5,494.5 786.8,483.5 C804.2,472.4 832.7,469.3 853.2,464.5 C873.7,459.8 892.7,462.9 910.1,455.0 C927.5,447.1 935.4,426.6 957.5,417.1 C979.6,407.6 1012.8,398.2 1042.8,398.2 C1072.8,398.2 1109.2,407.6 1137.6,417.1 C1166.0,426.6 1195.3,440.8 1213.4,455.0 C1231.6,469.3 1245.0,485.1 1246.6,502.4 C1248.2,519.8 1244.2,548.3 1222.9,559.3 C1201.6,570.4 1140.8,562.5 1118.6,568.8 C1096.5,575.1 1082.3,594.9 1090.2,597.2 C1098.1,599.6 1139.2,586.2 1166.0,583.0 C1192.9,579.9 1233.2,569.6 1251.4,578.3 C1269.5,587.0 1273.5,613.0 1275.1,635.2 C1276.6,657.3 1271.1,690.5 1260.8,711.0 C1250.6,731.5 1234.0,744.2 1213.4,758.4 C1192.9,772.6 1166.0,782.1 1137.6,796.3 C1109.2,810.5 1076.0,831.1 1042.8,843.7 C1009.6,856.4 970.1,869.0 938.5,872.2 C906.9,875.3 875.3,873.7 853.2,862.7 C831.1,851.6 809.0,826.3 805.8,805.8 C802.6,785.3 821.6,756.8 834.2,739.4 C846.9,722.1 883.2,712.6 881.6,701.5 C880.1,690.5 845.3,677.8 824.8,673.1 C804.2,668.3 773.4,682.6 758.4,673.1 C743.4,663.6 736.3,639.9 734.7,616.2 Z"/><path d="M540.4,891.1 C544.3,859.5 557.7,831.1 568.8,805.8 C579.9,780.5 590.9,753.7 606.7,739.4 C622.5,725.2 646.2,715.7 663.6,720.5 C681.0,725.2 699.9,744.2 711.0,767.9 C722.1,791.6 718.9,840.6 730.0,862.7 C741.0,884.8 756.8,892.7 777.4,900.6 C797.9,908.5 827.9,905.3 853.2,910.1 C878.5,914.8 903.8,922.7 929.0,929.0 C954.3,935.4 985.9,932.2 1004.9,948.0 C1023.8,963.8 1036.5,995.4 1042.8,1023.8 C1049.1,1052.3 1049.1,1091.8 1042.8,1118.6 C1036.5,1145.5 1020.7,1158.1 1004.9,1185.0 C989.1,1211.9 995.4,1264.0 948.0,1279.8 C900.6,1295.6 771.0,1295.6 720.5,1279.8 C669.9,1264.0 668.3,1216.6 644.6,1185.0 C620.9,1153.4 594.9,1121.8 578.3,1090.2 C561.7,1058.6 551.4,1028.6 545.1,995.4 C538.8,962.2 536.4,922.7 540.4,891.1 Z"/></g><ellipse cx="360" cy="891" rx="133" ry="125" fill="#b26a30"/><ellipse cx="1270" cy="938" rx="137" ry="133" fill="#b26a30"/><path d="M783.0,341.3 C779.9,322.3 779.9,289.1 786.8,265.4 C793.8,241.7 807.4,218.0 824.8,199.1 C842.1,180.1 867.4,161.2 891.1,151.7 C914.8,142.2 941.7,139.0 967.0,142.2 C992.2,145.4 1020.7,158.0 1042.8,170.6 C1064.9,183.3 1084.7,199.1 1099.7,218.0 C1114.7,237.0 1128.1,262.3 1132.9,284.4 C1137.6,306.5 1133.6,335.0 1128.1,350.8 C1122.6,366.6 1112.3,376.0 1099.7,379.2 C1087.0,382.4 1066.5,377.6 1052.3,369.7 C1038.1,361.8 1028.6,342.1 1014.4,331.8 C1000.1,321.5 984.3,312.0 967.0,308.1 C949.6,304.1 925.9,304.1 910.1,308.1 C894.3,312.0 883.2,321.5 872.2,331.8 C861.1,342.1 854.8,361.8 843.7,369.7 C832.7,377.6 815.9,383.9 805.8,379.2 C795.7,374.5 786.2,360.2 783.0,341.3 Z" fill="#78bcd2"/><path d="M1164.1,1185.0 C1170.5,1162.9 1192.6,1158.1 1213.4,1147.1 C1234.3,1136.0 1265.6,1131.3 1289.3,1118.6 C1313.0,1106.0 1336.7,1088.6 1355.6,1071.2 C1374.6,1053.9 1390.4,1031.7 1403.0,1014.4 C1415.7,997.0 1418.8,976.4 1431.5,967.0 C1444.1,957.5 1463.1,951.2 1478.9,957.5 C1494.7,963.8 1514.4,982.8 1526.3,1004.9 C1538.1,1027.0 1546.8,1060.2 1550.0,1090.2 C1553.1,1120.2 1550.8,1153.4 1545.2,1185.0 C1539.7,1216.6 1578.4,1264.0 1516.8,1279.8 C1455.2,1295.6 1234.3,1295.6 1175.5,1279.8 C1116.7,1264.0 1157.8,1207.1 1164.1,1185.0 Z" fill="#78bcd2"/><path d="M199.1,502.4 C204.6,467.7 213.3,428.2 227.5,398.2 C241.7,368.1 262.3,346.0 284.4,322.3 C306.5,298.6 333.4,275.7 360.2,256.0 C387.1,236.2 421.9,211.7 445.6,203.8 C469.3,195.9 489.8,198.3 502.4,208.6 C515.1,218.8 521.4,241.7 521.4,265.4 C521.4,289.1 510.3,330.2 502.4,350.8 C494.5,371.3 472.4,393.4 474.0,388.7 C475.6,383.9 494.5,340.5 511.9,322.3 C529.3,304.1 556.2,284.4 578.3,279.7 C600.4,274.9 627.3,280.4 644.6,293.9 C662.0,307.3 675.4,333.4 682.6,360.2 C689.7,387.1 690.5,421.9 687.3,455.0 C684.1,488.2 673.9,527.7 663.6,559.3 C653.3,590.9 644.6,619.4 625.7,644.6 C606.7,669.9 578.3,695.2 549.8,711.0 C521.4,726.8 478.7,741.0 455.0,739.4 C431.3,737.9 420.3,715.7 407.6,701.5 C395.0,687.3 388.7,668.3 379.2,654.1 C369.7,639.9 360.2,613.0 350.8,616.2 C341.3,619.4 335.0,658.9 322.3,673.1 C309.7,687.3 292.3,699.9 274.9,701.5 C257.5,703.1 231.5,698.4 218.0,682.6 C204.6,666.8 197.5,636.7 194.3,606.7 C191.2,576.7 193.5,537.2 199.1,502.4 Z" fill="#48a84a" filter="url(#lump)"/><path d="M734.7,616.2 C733.1,592.5 740.2,553.0 748.9,530.9 C757.6,508.8 769.5,494.5 786.8,483.5 C804.2,472.4 832.7,469.3 853.2,464.5 C873.7,459.8 892.7,462.9 910.1,455.0 C927.5,447.1 935.4,426.6 957.5,417.1 C979.6,407.6 1012.8,398.2 1042.8,398.2 C1072.8,398.2 1109.2,407.6 1137.6,417.1 C1166.0,426.6 1195.3,440.8 1213.4,455.0 C1231.6,469.3 1245.0,485.1 1246.6,502.4 C1248.2,519.8 1244.2,548.3 1222.9,559.3 C1201.6,570.4 1140.8,562.5 1118.6,568.8 C1096.5,575.1 1082.3,594.9 1090.2,597.2 C1098.1,599.6 1139.2,586.2 1166.0,583.0 C1192.9,579.9 1233.2,569.6 1251.4,578.3 C1269.5,587.0 1273.5,613.0 1275.1,635.2 C1276.6,657.3 1271.1,690.5 1260.8,711.0 C1250.6,731.5 1234.0,744.2 1213.4,758.4 C1192.9,772.6 1166.0,782.1 1137.6,796.3 C1109.2,810.5 1076.0,831.1 1042.8,843.7 C1009.6,856.4 970.1,869.0 938.5,872.2 C906.9,875.3 875.3,873.7 853.2,862.7 C831.1,851.6 809.0,826.3 805.8,805.8 C802.6,785.3 821.6,756.8 834.2,739.4 C846.9,722.1 883.2,712.6 881.6,701.5 C880.1,690.5 845.3,677.8 824.8,673.1 C804.2,668.3 773.4,682.6 758.4,673.1 C743.4,663.6 736.3,639.9 734.7,616.2 Z" fill="#48a84a" filter="url(#lump)"/><path d="M540.4,891.1 C544.3,859.5 557.7,831.1 568.8,805.8 C579.9,780.5 590.9,753.7 606.7,739.4 C622.5,725.2 646.2,715.7 663.6,720.5 C681.0,725.2 699.9,744.2 711.0,767.9 C722.1,791.6 718.9,840.6 730.0,862.7 C741.0,884.8 756.8,892.7 777.4,900.6 C797.9,908.5 827.9,905.3 853.2,910.1 C878.5,914.8 903.8,922.7 929.0,929.0 C954.3,935.4 985.9,932.2 1004.9,948.0 C1023.8,963.8 1036.5,995.4 1042.8,1023.8 C1049.1,1052.3 1049.1,1091.8 1042.8,1118.6 C1036.5,1145.5 1020.7,1158.1 1004.9,1185.0 C989.1,1211.9 995.4,1264.0 948.0,1279.8 C900.6,1295.6 771.0,1295.6 720.5,1279.8 C669.9,1264.0 668.3,1216.6 644.6,1185.0 C620.9,1153.4 594.9,1121.8 578.3,1090.2 C561.7,1058.6 551.4,1028.6 545.1,995.4 C538.8,962.2 536.4,922.7 540.4,891.1 Z" fill="#48a84a" filter="url(#lump)"/><g filter="url(#tex)"><ellipse cx="360" cy="891" rx="133" ry="125" fill="#ffc080"/><ellipse cx="1270" cy="938" rx="137" ry="133" fill="#ffc080"/><path d="M199.1,502.4 C204.6,467.7 213.3,428.2 227.5,398.2 C241.7,368.1 262.3,346.0 284.4,322.3 C306.5,298.6 333.4,275.7 360.2,256.0 C387.1,236.2 421.9,211.7 445.6,203.8 C469.3,195.9 489.8,198.3 502.4,208.6 C515.1,218.8 521.4,241.7 521.4,265.4 C521.4,289.1 510.3,330.2 502.4,350.8 C494.5,371.3 472.4,393.4 474.0,388.7 C475.6,383.9 494.5,340.5 511.9,322.3 C529.3,304.1 556.2,284.4 578.3,279.7 C600.4,274.9 627.3,280.4 644.6,293.9 C662.0,307.3 675.4,333.4 682.6,360.2 C689.7,387.1 690.5,421.9 687.3,455.0 C684.1,488.2 673.9,527.7 663.6,559.3 C653.3,590.9 644.6,619.4 625.7,644.6 C606.7,669.9 578.3,695.2 549.8,711.0 C521.4,726.8 478.7,741.0 455.0,739.4 C431.3,737.9 420.3,715.7 407.6,701.5 C395.0,687.3 388.7,668.3 379.2,654.1 C369.7,639.9 360.2,613.0 350.8,616.2 C341.3,619.4 335.0,658.9 322.3,673.1 C309.7,687.3 292.3,699.9 274.9,701.5 C257.5,703.1 231.5,698.4 218.0,682.6 C204.6,666.8 197.5,636.7 194.3,606.7 C191.2,576.7 193.5,537.2 199.1,502.4 Z" fill="#90f090" filter="url(#lump)"/><path d="M734.7,616.2 C733.1,592.5 740.2,553.0 748.9,530.9 C757.6,508.8 769.5,494.5 786.8,483.5 C804.2,472.4 832.7,469.3 853.2,464.5 C873.7,459.8 892.7,462.9 910.1,455.0 C927.5,447.1 935.4,426.6 957.5,417.1 C979.6,407.6 1012.8,398.2 1042.8,398.2 C1072.8,398.2 1109.2,407.6 1137.6,417.1 C1166.0,426.6 1195.3,440.8 1213.4,455.0 C1231.6,469.3 1245.0,485.1 1246.6,502.4 C1248.2,519.8 1244.2,548.3 1222.9,559.3 C1201.6,570.4 1140.8,562.5 1118.6,568.8 C1096.5,575.1 1082.3,594.9 1090.2,597.2 C1098.1,599.6 1139.2,586.2 1166.0,583.0 C1192.9,579.9 1233.2,569.6 1251.4,578.3 C1269.5,587.0 1273.5,613.0 1275.1,635.2 C1276.6,657.3 1271.1,690.5 1260.8,711.0 C1250.6,731.5 1234.0,744.2 1213.4,758.4 C1192.9,772.6 1166.0,782.1 1137.6,796.3 C1109.2,810.5 1076.0,831.1 1042.8,843.7 C1009.6,856.4 970.1,869.0 938.5,872.2 C906.9,875.3 875.3,873.7 853.2,862.7 C831.1,851.6 809.0,826.3 805.8,805.8 C802.6,785.3 821.6,756.8 834.2,739.4 C846.9,722.1 883.2,712.6 881.6,701.5 C880.1,690.5 845.3,677.8 824.8,673.1 C804.2,668.3 773.4,682.6 758.4,673.1 C743.4,663.6 736.3,639.9 734.7,616.2 Z" fill="#90f090" filter="url(#lump)"/><path d="M540.4,891.1 C544.3,859.5 557.7,831.1 568.8,805.8 C579.9,780.5 590.9,753.7 606.7,739.4 C622.5,725.2 646.2,715.7 663.6,720.5 C681.0,725.2 699.9,744.2 711.0,767.9 C722.1,791.6 718.9,840.6 730.0,862.7 C741.0,884.8 756.8,892.7 777.4,900.6 C797.9,908.5 827.9,905.3 853.2,910.1 C878.5,914.8 903.8,922.7 929.0,929.0 C954.3,935.4 985.9,932.2 1004.9,948.0 C1023.8,963.8 1036.5,995.4 1042.8,1023.8 C1049.1,1052.3 1049.1,1091.8 1042.8,1118.6 C1036.5,1145.5 1020.7,1158.1 1004.9,1185.0 C989.1,1211.9 995.4,1264.0 948.0,1279.8 C900.6,1295.6 771.0,1295.6 720.5,1279.8 C669.9,1264.0 668.3,1216.6 644.6,1185.0 C620.9,1153.4 594.9,1121.8 578.3,1090.2 C561.7,1058.6 551.4,1028.6 545.1,995.4 C538.8,962.2 536.4,922.7 540.4,891.1 Z" fill="#90f090" filter="url(#lump)"/></g></g></defs></svg>
<div style="left:0px;top:0px;width:3840px;height:56px;background:#f3f3f3"></div>
<svg style="left:2px;top:8px;" width="40" height="40" viewBox="0 0 40 40"><rect x="0" y="0" width="40" height="40" rx="12" fill="#0a74e6"/>
<path d="M40,14 L40,28 Q40,40 28,40 L14,40 Z" fill="#0059c0" opacity="0.6"/>
<rect x="5" y="5" width="30" height="30" rx="8" fill="#fff"/>
<rect x="7.5" y="7.5" width="25" height="25" rx="6" fill="#7cb6fb"/>
<circle cx="20" cy="20" r="7.5" fill="none" stroke="#fff" stroke-width="2"/>
<circle cx="22" cy="22" r="2.6" fill="#0b4fa8"/></svg>
<div class="t" style="left:48.00px;top:13.69px;font-size:31.25px;line-height:31.25px;letter-spacing:-0.770px;color:#000;font-weight:300">Deep Learning Editor - Instance Segmentation - model_nuts</div>
<div style="left:3537px;top:26px;width:20px;height:1.5px;background:#000"></div>
<svg style="left:3652px;top:17px;" width="21" height="21" viewBox="0 0 21 21"><rect x="0.75" y="4.5" width="15.5" height="15.5" rx="2.5" fill="none" stroke="#000" stroke-width="1.5"/><path d="M4.5,2 Q5,0.75 7,0.75 L17,0.75 Q20.25,0.75 20.25,4 L20.25,14 Q20.25,16 19,16.5" fill="none" stroke="#000" stroke-width="1.5"/></svg>
<svg style="left:3768px;top:17px;" width="21" height="21" viewBox="0 0 21 21"><path d="M0.5,0.5 L20.5,20.5 M20.5,0.5 L0.5,20.5" stroke="#000" stroke-width="1.5"/></svg>
<div style="left:0px;top:56px;width:773px;height:95px;background:linear-gradient(#f9f9f9 0,#f8f8f8 85%,#f1f1f1 100%)"></div>
<div style="left:3px;top:60px;width:2px;height:83px;border-left:2px dotted #b4b4b4"></div>
<div class="t" style="left:17.00px;top:86.58px;font-size:33.43px;line-height:33.43px;letter-spacing:-0.797px;color:#000;">Image Set</div>
<div style="left:0px;top:151px;width:773px;height:58px;background:#f3f3f3;border-top:1px solid #8f8f8f;border-left:1px solid #8f8f8f;border-right:1px solid #a0a0a0"></div>
<div style="left:1px;top:208px;width:771px;height:61px;background:#f9f9f9;border-right:1px solid #a0a0a0"></div>
<svg style="left:9px;top:163px;" width="37" height="36" viewBox="0 0 37 36"><path d="M0,5 L0,33 L37,33 L37,7 L18,7 L14,2 L3,2 Z" fill="#e6c38f"/><path d="M0,9 L37,9" stroke="#d8b27a" stroke-width="1"/><path d="M11,3 L17,8" stroke="#6b4a1e" stroke-width="1.5"/><path d="M26,19 L26,33 M19,26 L33,26" stroke="#5c3a12" stroke-width="2.5"/></svg>
<svg style="left:62px;top:157px;" width="40" height="42" viewBox="0 0 40 42"><g transform="translate(0,6)"><path d="M0,5 L0,33 L37,33 L37,7 L18,7 L14,2 L3,2 Z" fill="#e6c38f"/><path d="M0,9 L37,9" stroke="#d8b27a" stroke-width="1"/></g><path d="M34,5 Q22,3 21,14 L21,28" fill="none" stroke="#1a9a1a" stroke-width="6"/><path d="M12,22 L21,34 L30,22 Z" fill="#1a9a1a"/></svg>
<svg style="left:110.0px;top:181.0px;" width="12" height="6.0" viewBox="0 0 12 6.0"><path d="M0,0 L12,0 L6.0,6.0 Z" fill="#000"/></svg>
<svg style="left:138px;top:157px;" width="40" height="42" viewBox="0 0 40 42"><g transform="translate(0,6)"><path d="M0,5 L0,33 L37,33 L37,7 L18,7 L14,2 L3,2 Z" fill="#e6c38f"/><path d="M0,9 L37,9" stroke="#d8b27a" stroke-width="1"/></g><path d="M14,28 L14,16 Q14,9 24,9 L27,9" fill="none" stroke="#d00000" stroke-width="6"/><path d="M26,1 L40,10 L26,19 Z" fill="#d00000"/></svg>
<svg style="left:185.0px;top:181.0px;" width="12" height="6.0" viewBox="0 0 12 6.0"><path d="M0,0 L12,0 L6.0,6.0 Z" fill="#000"/></svg>
<svg style="left:216px;top:163px;" width="37" height="35" viewBox="0 0 37 35"><path d="M4,4 L33,31 M33,4 L4,31" stroke="#e8413a" stroke-width="6.5" stroke-linecap="round"/></svg>
<div style="left:264px;top:157px;width:1px;height:47px;background:#c9c9c9"></div>
<div class="t" style="left:275.00px;top:166.05px;font-size:30.52px;line-height:30.52px;letter-spacing:-0.570px;color:#000;">10/10 images</div>
<svg style="left:695px;top:163px;" width="36" height="34" viewBox="0 0 36 34"><rect x="0" y="0" width="36" height="34" rx="2" fill="#555"/><rect x="5" y="4" width="11" height="11" fill="#fff"/></svg>
<svg style="left:749.0px;top:179.0px;" width="12" height="6.0" viewBox="0 0 12 6.0"><path d="M0,0 L12,0 L6.0,6.0 Z" fill="#000"/></svg>
<div class="t" style="left:24.00px;top:221.29px;font-size:29.07px;line-height:29.07px;letter-spacing:-0.519px;color:#000;">Filter</div>
<div style="left:114px;top:214px;width:560px;height:49px;background:#fff"></div>
<div style="left:673px;top:214px;width:38px;height:49px;background:#f9f9f9"></div>
<svg style="left:685.0px;top:236.0px;" width="12" height="6.0" viewBox="0 0 12 6.0"><path d="M0,0 L12,0 L6.0,6.0 Z" fill="#000"/></svg>
<div class="t" style="left:119.50px;top:224.05px;font-size:30.52px;line-height:30.52px;letter-spacing:-1.956px;color:#000;">All</div>
<svg style="left:722px;top:218px;" width="34" height="36" viewBox="0 0 34 36"><path d="M1,2 Q17,-2 33,2 L20,16 L20,34 L14,30 L14,16 Z" fill="#9e9e9e"/></svg>
<div style="left:0px;top:268px;width:773px;height:900px;background:#fff;border-left:1px solid #8f8f8f;border-right:1px solid #a0a0a0;border-bottom:1px solid #a0a0a0"></div>
<div style="left:729px;top:269px;width:43px;height:898px;background:#f0f0f0"></div>
<div style="left:737px;top:312px;width:28px;height:235px;background:#888"></div>
<div style="left:2px;top:269px;width:727px;height:312px;background:#a9a9a9;border:2px solid #000"></div>
<svg style="left:172px;top:281px" width="385" height="289" viewBox="0 0 1818 1370" preserveAspectRatio="none"><use href="#img1t"/></svg>
<div style="left:13px;top:521px;width:149px;height:47px;background:#8dcff7"></div>
<div class="t" style="left:22.50px;top:523.29px;font-size:41.43px;line-height:41.43px;letter-spacing:-0.083px;color:#000;">Train</div>
<svg style="left:172px;top:593px" width="385" height="289" viewBox="0 0 1818 1370" preserveAspectRatio="none"><use href="#img2"/></svg>
<div style="left:13px;top:833px;width:149px;height:47px;background:#8dcff7"></div>
<div class="t" style="left:22.50px;top:835.29px;font-size:41.43px;line-height:41.43px;letter-spacing:-0.083px;color:#000;">Train</div>
<svg style="left:172px;top:905px" width="385" height="289" viewBox="0 0 1818 1370" preserveAspectRatio="none"><use href="#img3"/></svg>
<div style="left:13px;top:1145px;width:149px;height:47px;background:#8dcff7"></div>
<div class="t" style="left:22.50px;top:1147.29px;font-size:41.43px;line-height:41.43px;letter-spacing:-0.083px;color:#000;">Train</div>
<div style="left:0px;top:1168px;width:773px;height:69px;background:#f0f0f0;border-top:1px solid #a0a0a0"></div>
<div class="t" style="left:7.50px;top:1189.47px;font-size:34.16px;line-height:34.16px;letter-spacing:-0.815px;color:#000;">Training Parameters</div>
<div style="left:0px;top:1237px;width:773px;height:395px;background:#f0f0f0;border-top:1px solid #a0a0a0;border-left:1px solid #8f8f8f;border-right:1px solid #a0a0a0"></div>
<div style="left:1px;top:1238px;width:728px;height:52px;background:#d9d9d9;border-bottom:1px solid #a0a0a0"></div>
<div style="left:729px;top:1238px;width:43px;height:52px;background:#d9d9d9;border-bottom:1px solid #a0a0a0"></div>
<div style="left:401px;top:1238px;width:1px;height:52px;background:#a0a0a0"></div>
<div style="left:456px;top:1238px;width:1px;height:52px;background:#a0a0a0"></div>
<div style="left:729px;top:1238px;width:1px;height:52px;background:#a0a0a0"></div>
<div class="t" style="left:165.00px;top:1248.79px;font-size:29.07px;line-height:29.07px;letter-spacing:-2.186px;color:#000;">Name</div>
<div class="t" style="left:557.50px;top:1248.79px;font-size:29.07px;line-height:29.07px;letter-spacing:-1.170px;color:#000;">Value</div>
<svg style="left:409px;top:1247px;" width="36" height="36" viewBox="0 0 36 36"><path d="M29.56,15.46 L33.85,15.81 L33.85,20.19 L29.56,20.54 L27.97,24.38 L30.76,27.66 L27.66,30.76 L24.38,27.97 L20.54,29.56 L20.19,33.85 L15.81,33.85 L15.46,29.56 L11.62,27.97 L8.34,30.76 L5.24,27.66 L8.03,24.38 L6.44,20.54 L2.15,20.19 L2.15,15.81 L6.44,15.46 L8.03,11.62 L5.24,8.34 L8.34,5.24 L11.62,8.03 L15.46,6.44 L15.81,2.15 L20.19,2.15 L20.54,6.44 L24.38,8.03 L27.66,5.24 L30.76,8.34 L27.97,11.62 Z" fill="#555" stroke="#555" stroke-width="1.92" stroke-linejoin="round"/><circle cx="18" cy="18" r="4.80" fill="#d9d9d9"/></svg>
<div style="left:1px;top:1290px;width:728px;height:52px;background:#f5f5f5;border-bottom:1px solid #d4d4d4"></div>
<div style="left:401px;top:1290px;width:1px;height:52px;background:#d4d4d4"></div>
<div style="left:456px;top:1290px;width:1px;height:52px;background:#d4d4d4"></div>
<div class="t" style="left:49.00px;top:1299.05px;font-size:30.52px;line-height:30.52px;letter-spacing:-1.449px;color:#000;">Network Depth</div>
<div class="t" style="left:467.50px;top:1299.05px;font-size:30.52px;line-height:30.52px;letter-spacing:-2.971px;color:#000;">3</div>
<div style="left:1px;top:1342px;width:728px;height:52px;background:#d3d3d3"></div>
<div class="t" style="left:7.50px;top:1350.94px;font-size:31.25px;line-height:31.25px;letter-spacing:-1.750px;color:#000;font-weight:bold;">Pre-Processing</div>
<div style="left:1px;top:1394px;width:728px;height:52px;background:#f5f5f5;border-bottom:1px solid #d4d4d4"></div>
<div style="left:401px;top:1394px;width:1px;height:52px;background:#d4d4d4"></div>
<div style="left:456px;top:1394px;width:1px;height:52px;background:#d4d4d4"></div>
<div class="t" style="left:49.00px;top:1403.67px;font-size:29.80px;line-height:29.80px;letter-spacing:-0.810px;color:#000;">Convert to Grayscale</div>
<div class="t" style="left:467.50px;top:1403.67px;font-size:29.80px;line-height:29.80px;letter-spacing:-1.088px;color:#000;">False</div>
<div style="left:1px;top:1446px;width:728px;height:52px;background:#d3d3d3"></div>
<div class="t" style="left:7.50px;top:1455.05px;font-size:30.52px;line-height:30.52px;letter-spacing:-1.596px;color:#000;font-weight:bold;">Augmentations</div>
<div style="left:1px;top:1498px;width:728px;height:52px;background:#f5f5f5;border-bottom:1px solid #d4d4d4"></div>
<div style="left:401px;top:1498px;width:1px;height:52px;background:#d4d4d4"></div>
<div style="left:456px;top:1498px;width:1px;height:52px;background:#d4d4d4"></div>
<div class="t" style="left:49.00px;top:1507.55px;font-size:30.52px;line-height:30.52px;letter-spacing:-0.894px;color:#000;">Rotation Angle [°]</div>
<div class="t" style="left:467.50px;top:1507.55px;font-size:30.52px;line-height:30.52px;letter-spacing:-1.442px;color:#000;font-weight:bold;">90</div>
<div style="left:1px;top:1550px;width:728px;height:52px;background:#ffffff;border-bottom:1px solid #d4d4d4"></div>
<div style="left:401px;top:1550px;width:1px;height:52px;background:#d4d4d4"></div>
<div style="left:456px;top:1550px;width:1px;height:52px;background:#d4d4d4"></div>
<div class="t" style="left:49.00px;top:1560.05px;font-size:30.52px;line-height:30.52px;letter-spacing:-1.353px;color:#000;">Flip Up-Down</div>
<div class="t" style="left:467.50px;top:1560.05px;font-size:30.52px;line-height:30.52px;letter-spacing:-1.155px;color:#000;font-weight:bold;">True</div>
<div style="left:1px;top:1602px;width:728px;height:52px;background:#ffffff;border-bottom:1px solid #d4d4d4"></div>
<div style="left:401px;top:1602px;width:1px;height:52px;background:#d4d4d4"></div>
<div style="left:456px;top:1602px;width:1px;height:52px;background:#d4d4d4"></div>
<div class="t" style="left:49.00px;top:1612.05px;font-size:30.52px;line-height:30.52px;letter-spacing:-0.929px;color:#000;">Flip Left-Right</div>
<div class="t" style="left:467.50px;top:1612.05px;font-size:30.52px;line-height:30.52px;letter-spacing:-1.155px;color:#000;font-weight:bold;">True</div>
<div style="left:737px;top:1333px;width:28px;height:83px;background:#888"></div>
<div style="left:0px;top:1632px;width:773px;height:186px;background:#fff;border:1px solid #a0a0a0;border-left-color:#8f8f8f"></div>
<div class="t" style="left:12.50px;top:1645.35px;font-size:34.88px;line-height:34.88px;letter-spacing:-0.502px;color:#000;font-weight:bold;">No element selected.</div>
<div style="left:709px;top:1637px;width:56px;height:50px;background:#fafafa;border:1px solid #dcdcdc;border-radius:3px"></div>
<svg style="left:726px;top:1652px;" width="20" height="20" viewBox="0 0 20 20"><path d="M2,2 L18,18 M18,2 L2,18" stroke="#000" stroke-width="4.5"/></svg>
<div style="left:0px;top:1817px;width:773px;height:130px;background:#f0f0f0;border:1px solid #8f8f8f;border-top:2px solid #808080"></div>
<div class="t" style="left:16.50px;top:1835.97px;font-size:34.16px;line-height:34.16px;letter-spacing:-0.859px;color:#000;">Model History</div>
<div class="t" style="left:15.00px;top:1894.05px;font-size:30.52px;line-height:30.52px;letter-spacing:-1.094px;color:#000;">Version 1</div>
<div class="t" style="left:471.00px;top:1894.05px;font-size:30.52px;line-height:30.52px;letter-spacing:-0.995px;color:#000;">Total size 51 MB</div>
<div style="left:706px;top:1883px;width:59px;height:53px;background:#fafafa;border:1px solid #dcdcdc;border-radius:3px"></div>
<svg style="left:700px;top:1875px" width="70" height="70" viewBox="700 1875 70 70"><path d="M721.5,1920.5 A20.3,17.3 0 1 0 718.2,1905.5" fill="none" stroke="#000" stroke-width="6"/><path d="M709.2,1905.1 L725.8,1906.2 L716.6,1917.9 Z" fill="#000"/></svg>
<div style="left:0px;top:1954px;width:3840px;height:88px;background:#a0a0a0;border-bottom:2px solid #6f6f6f"></div>
<svg style="left:19px;top:1966px;" width="35" height="35" viewBox="0 0 35 35"><defs><radialGradient id="hb" cx="0.4" cy="0.3" r="0.8"><stop offset="0" stop-color="#6ec0ff"/><stop offset="1" stop-color="#1a7fe0"/></radialGradient></defs><circle cx="17.5" cy="17.5" r="16.5" fill="url(#hb)" stroke="#1869c0" stroke-width="1"/><text x="17.5" y="27" text-anchor="middle" font-family="Liberation Sans" font-weight="bold" font-size="26" fill="#fff">?</text></svg>
<svg style="left:97px;top:1966px;" width="46" height="42" viewBox="0 0 46 42"><defs><radialGradient id="gb" cx="0.35" cy="0.3" r="0.75"><stop offset="0" stop-color="#3cf03c"/><stop offset="0.6" stop-color="#10c010"/><stop offset="1" stop-color="#0a7a0a"/></radialGradient></defs><ellipse cx="23" cy="21" rx="21.5" ry="19.5" fill="url(#gb)"/></svg>
<div class="t" style="left:179.00px;top:1977.44px;font-size:31.25px;line-height:31.25px;letter-spacing:-1.505px;color:#000;">Service is online. Using NVIDIA GeForce RTX 2070 with Max-Q Design.</div>
<div style="left:3065px;top:1969px;width:213px;height:52px;background:#f7f7f7;border:1px solid #c8c8c8;border-radius:2px"></div>
<div class="t" style="left:3138.50px;top:1978.82px;font-size:31.98px;line-height:31.98px;letter-spacing:-3.125px;color:#000;">Save</div>
<div style="left:3297px;top:1969px;width:213px;height:52px;background:#fdfdfd;border:1px solid #c8c8c8;border-radius:2px"></div>
<div class="t" style="left:3330.50px;top:1978.82px;font-size:31.98px;line-height:31.98px;letter-spacing:-2.029px;color:#000;">Save &amp; Exit</div>
<div style="left:3529px;top:1969px;width:291px;height:52px;background:#fdfdfd;border:1px solid #c8c8c8;border-radius:2px"></div>
<div class="t" style="left:3550.50px;top:1978.82px;font-size:31.98px;line-height:31.98px;letter-spacing:-1.791px;color:#000;">Exit Without Saving</div>
<div style="left:779px;top:56px;width:2454px;height:88px;background:linear-gradient(#f9f9f9 0,#f8f8f8 82%,#f1f1f1 100%)"></div>
<div class="t" style="left:786.50px;top:83.58px;font-size:33.43px;line-height:33.43px;letter-spacing:-0.490px;color:#000;">Workflow</div>
<div style="left:979px;top:57px;width:314px;height:87px;border:1px solid #1e7fd8;background:#f9f9f9"></div>
<svg style="left:985px;top:82px;" width="36" height="36" viewBox="0 0 36 36"><circle cx="8" cy="9" r="8" fill="#c46a2a"/><circle cx="26" cy="9" r="8" fill="#2f5fd0"/><circle cx="17" cy="26" r="8" fill="#8ac43a"/><text x="8" y="12.5" font-size="10" text-anchor="middle" fill="#fff" font-family="Liberation Sans">A</text><text x="26" y="12.5" font-size="10" text-anchor="middle" fill="#fff" font-family="Liberation Sans">B</text><text x="17" y="29.5" font-size="10" text-anchor="middle" fill="#fff" font-family="Liberation Sans">C</text></svg>
<div class="t" style="left:1030.00px;top:85.58px;font-size:33.43px;line-height:33.43px;letter-spacing:-2.067px;color:#000;">1. Labeling Objects</div>
<svg style="left:1304px;top:85px;" width="20" height="30" viewBox="0 0 20 30"><path d="M3,2 L14,14.5 L3,27" fill="none" stroke="#808080" stroke-width="5" stroke-linejoin="miter"/></svg>
<svg style="left:1338px;top:83px;" width="34" height="33" viewBox="0 0 34 33"><rect x="5" y="8" width="20" height="20" fill="#1a73c8"/><path d="M14,2 L31,2 L31,19" fill="none" stroke="#666" stroke-width="2.5"/><path d="M1,20 L1,32 L13,32" fill="none" stroke="#666" stroke-width="2.5"/></svg>
<div class="t" style="left:1383.00px;top:85.82px;font-size:31.98px;line-height:31.98px;letter-spacing:-1.098px;color:#000;">2. Region of Interest</div>
<svg style="left:1673px;top:85px;" width="20" height="30" viewBox="0 0 20 30"><path d="M3,2 L14,14.5 L3,27" fill="none" stroke="#808080" stroke-width="5" stroke-linejoin="miter"/></svg>
<svg style="left:1708px;top:83px;" width="32" height="34" viewBox="0 0 32 34"><path d="M2,2 L2,34" stroke="#c9a57a" stroke-width="2.5"/><rect x="4" y="3" width="5" height="5" fill="#1f3b73"/><rect x="4" y="8" width="5" height="5" fill="#e8ecf4"/><rect x="4" y="13" width="5" height="5" fill="#1f3b73"/><rect x="4" y="18" width="5" height="5" fill="#e8ecf4"/><rect x="9" y="3" width="5" height="5" fill="#e8ecf4"/><rect x="9" y="8" width="5" height="5" fill="#1f3b73"/><rect x="9" y="13" width="5" height="5" fill="#e8ecf4"/><rect x="9" y="18" width="5" height="5" fill="#1f3b73"/><rect x="14" y="3" width="5" height="5" fill="#1f3b73"/><rect x="14" y="8" width="5" height="5" fill="#e8ecf4"/><rect x="14" y="13" width="5" height="5" fill="#1f3b73"/><rect x="14" y="18" width="5" height="5" fill="#e8ecf4"/><rect x="19" y="3" width="5" height="5" fill="#e8ecf4"/><rect x="19" y="8" width="5" height="5" fill="#1f3b73"/><rect x="19" y="13" width="5" height="5" fill="#e8ecf4"/><rect x="19" y="18" width="5" height="5" fill="#1f3b73"/><rect x="24" y="3" width="5" height="5" fill="#1f3b73"/><rect x="24" y="8" width="5" height="5" fill="#e8ecf4"/><rect x="24" y="13" width="5" height="5" fill="#1f3b73"/><rect x="24" y="18" width="5" height="5" fill="#e8ecf4"/><rect x="29" y="3" width="5" height="5" fill="#e8ecf4"/><rect x="29" y="8" width="5" height="5" fill="#1f3b73"/><rect x="29" y="13" width="5" height="5" fill="#e8ecf4"/><rect x="29" y="18" width="5" height="5" fill="#1f3b73"/></svg>
<div class="t" style="left:1752.00px;top:85.82px;font-size:31.98px;line-height:31.98px;letter-spacing:-1.713px;color:#000;">3. Training Results</div>
<div style="left:976px;top:152px;width:1px;height:77px;background:#c8c8c8"></div>
<div style="left:2286px;top:151px;width:1px;height:80px;background:#c8c8c8"></div>
<svg style="left:770px;top:150px" width="200" height="80" viewBox="770 150 200 80"><path d="M785,175.5 L785,195 L802,195 Z" fill="#a6a6a6"/><path d="M794,187 Q804,175 813,180 Q820,186 818,197 Q816,203 813,207" fill="none" stroke="#a6a6a6" stroke-width="6"/><path d="M867.5,175.5 L867.5,195 L850.5,195 Z" fill="#a6a6a6"/><path d="M858.5,187 Q848.5,175 839.5,180 Q832.5,186 834.5,197 Q836.5,203 839.5,207" fill="none" stroke="#a6a6a6" stroke-width="6"/><path d="M943,174.3 L936.6,202.5 M960.9,178.2 L953.9,206.4 M935.9,178.8 L965.4,186.5 M932.7,194.8 L961.5,201.9" stroke="#111" stroke-width="2.8"/><text x="948" y="194" font-size="11" font-family="Liberation Serif" text-anchor="middle" transform="rotate(14 948 190)" fill="#111">1</text></svg>
<svg style="left:889px;top:171px;" width="35" height="39" viewBox="0 0 35 39"><rect x="1.5" y="1.5" width="30" height="36" rx="3" fill="#fff" stroke="#111" stroke-width="3"/><path d="M7,9 L26,9 M7,15 L26,15 M7,21 L26,21 M7,27 L18,27" stroke="#111" stroke-width="2.5"/><rect x="17" y="22" width="17" height="16" rx="4" fill="#ffc04a" stroke="#e09a10" stroke-width="1"/></svg>
<div class="t" style="left:991.00px;top:177.17px;font-size:29.80px;line-height:29.80px;letter-spacing:-1.961px;color:#000;">Scale:</div>
<div style="left:1080px;top:167px;width:187px;height:48px;background:#fff"></div>
<div style="left:1229px;top:167px;width:38px;height:48px;background:#f8f8f8"></div>
<div class="t" style="left:1084.00px;top:177.17px;font-size:29.80px;line-height:29.80px;letter-spacing:-1.369px;color:#000;">280 %</div>
<svg style="left:1242.0px;top:189.0px;" width="12" height="6.0" viewBox="0 0 12 6.0"><path d="M0,0 L12,0 L6.0,6.0 Z" fill="#000"/></svg>
<svg style="left:1272px;top:170px;" width="40" height="40" viewBox="0 0 40 40"><rect x="0" y="0" width="40" height="40" fill="#4d8ee0"/><rect x="3" y="3" width="34" height="34" fill="#cfe0f5"/><rect x="6" y="8" width="14" height="10" fill="#888"/><path d="M4,22 L30,22 L30,30 L4,30 Z" fill="#1a3fa0"/><path d="M22,2 L38,2 L38,18" fill="none" stroke="#3070d0" stroke-width="2"/><path d="M28,26 L36,26" stroke="#3070d0" stroke-width="2"/></svg>
<svg style="left:1320px;top:170px;" width="40" height="40" viewBox="0 0 40 40"><rect x="6" y="6" width="28" height="28" fill="none" stroke="#333" stroke-width="4"/><path d="M2,2 L38,38" stroke="#e8b040" stroke-width="3.5"/></svg>
<svg style="left:1370.0px;top:189.0px;" width="12" height="6.0" viewBox="0 0 12 6.0"><path d="M0,0 L12,0 L6.0,6.0 Z" fill="#000"/></svg>
<div class="t" style="left:1407.50px;top:177.05px;font-size:30.52px;line-height:30.52px;letter-spacing:-1.145px;color:#000;">View:</div>
<svg style="left:1494px;top:172px;" width="36" height="36" viewBox="0 0 36 36"><rect x="2" y="2" width="8" height="8" fill="#ffd000" stroke="#555" stroke-width="0.8"/><rect x="2" y="10" width="8" height="8" fill="#ffd000" stroke="#555" stroke-width="0.8"/><rect x="2" y="18" width="8" height="8" fill="#ff2000" stroke="#555" stroke-width="0.8"/><rect x="2" y="26" width="8" height="8" fill="#ff2000" stroke="#555" stroke-width="0.8"/><rect x="10" y="2" width="8" height="8" fill="#ff8000" stroke="#555" stroke-width="0.8"/><rect x="10" y="10" width="8" height="8" fill="#ff8000" stroke="#555" stroke-width="0.8"/><rect x="10" y="18" width="8" height="8" fill="#808080" stroke="#555" stroke-width="0.8"/><rect x="10" y="26" width="8" height="8" fill="#a0a0a0" stroke="#555" stroke-width="0.8"/><rect x="18" y="2" width="8" height="8" fill="#ff2000" stroke="#555" stroke-width="0.8"/><rect x="18" y="10" width="8" height="8" fill="#ff2000" stroke="#555" stroke-width="0.8"/><rect x="18" y="18" width="8" height="8" fill="#a0a0a0" stroke="#555" stroke-width="0.8"/><rect x="18" y="26" width="8" height="8" fill="#a0a0a0" stroke="#555" stroke-width="0.8"/><rect x="26" y="2" width="8" height="8" fill="#808080" stroke="#555" stroke-width="0.8"/><rect x="26" y="10" width="8" height="8" fill="#a0a0a0" stroke="#555" stroke-width="0.8"/><rect x="26" y="18" width="8" height="8" fill="#a0a0a0" stroke="#555" stroke-width="0.8"/><rect x="26" y="26" width="8" height="8" fill="#a0a0a0" stroke="#555" stroke-width="0.8"/><path d="M1,35 L35,1" stroke="#111" stroke-width="4"/></svg>
<div class="t" style="left:1539.00px;top:177.05px;font-size:30.52px;line-height:30.52px;letter-spacing:-0.675px;color:#000;">Pre-processing</div>
<div class="t" style="left:1768.00px;top:177.05px;font-size:30.52px;line-height:30.52px;letter-spacing:-1.602px;color:#000;">Mask:</div>
<svg style="left:1858px;top:171px;" width="38" height="38" viewBox="0 0 38 38"><path d="M30,2 L12,24" stroke="#0f8a1a" stroke-width="6"/><path d="M2,36 L4,16 L22,30 Z" fill="#0f8a1a"/><path d="M20,37 L37,37" stroke="#bbb" stroke-width="3"/></svg>
<div class="t" style="left:1904.00px;top:177.05px;font-size:30.52px;line-height:30.52px;letter-spacing:0.499px;color:#000;">Import</div>
<svg style="left:2012px;top:171px;" width="38" height="38" viewBox="0 0 38 38"><path d="M6,34 L24,12" stroke="#0f8a1a" stroke-width="6"/><path d="M34,1 L32,22 L14,8 Z" fill="#0f8a1a"/><path d="M18,37 L35,37" stroke="#bbb" stroke-width="3"/></svg>
<div class="t" style="left:2057.00px;top:177.05px;font-size:30.52px;line-height:30.52px;letter-spacing:-1.043px;color:#000;">Export</div>
<svg style="left:2158px;top:169px;" width="32" height="40" viewBox="0 0 32 40"><rect x="11" y="1" width="10" height="5" rx="2" fill="#333"/><rect x="1" y="5" width="30" height="6" rx="2" fill="#333"/><path d="M4,12 L28,12 L26,39 L6,39 Z" fill="#333"/><path d="M10,15 L10,35 M16,15 L16,35 M22,15 L22,35" stroke="#888" stroke-width="2"/></svg>
<div class="t" style="left:2204.00px;top:177.05px;font-size:30.52px;line-height:30.52px;letter-spacing:-1.863px;color:#000;">Clear</div>
<svg style="left:2290px;top:170px;" width="40" height="40" viewBox="0 0 40 40"><path d="M14,14 L38,38" stroke="#333" stroke-width="3.5"/><path d="M10,1 L13,8 L20,8 L15,13 L17,20 L10,16 L4,20 L6,13 L1,8 L8,8 Z" fill="#ffd21a" stroke="#222" stroke-width="1.2"/></svg>
<div class="t" style="left:2339.00px;top:177.05px;font-size:30.52px;line-height:30.52px;letter-spacing:-0.663px;color:#000;">Auto Label</div>
<div class="t" style="left:787.00px;top:254.17px;font-size:29.80px;line-height:29.80px;letter-spacing:1.345px;color:#000;">Class:</div>
<div style="left:894px;top:242px;width:62px;height:55px;background:#fafafa;border:1px solid #dcdcdc;border-radius:3px"></div>
<svg style="left:905px;top:249px;" width="40" height="40" viewBox="0 0 40 40"><path d="M32.29,17.30 L36.84,17.67 L36.84,22.33 L32.29,22.70 L30.60,26.78 L33.55,30.26 L30.26,33.55 L26.78,30.60 L22.70,32.29 L22.33,36.84 L17.67,36.84 L17.30,32.29 L13.22,30.60 L9.74,33.55 L6.45,30.26 L9.40,26.78 L7.71,22.70 L3.16,22.33 L3.16,17.67 L7.71,17.30 L9.40,13.22 L6.45,9.74 L9.74,6.45 L13.22,9.40 L17.30,7.71 L17.67,3.16 L22.33,3.16 L22.70,7.71 L26.78,9.40 L30.26,6.45 L33.55,9.74 L30.60,13.22 Z" fill="#0063b1" stroke="#0063b1" stroke-width="2.04" stroke-linejoin="round"/><circle cx="20" cy="20" r="5.10" fill="#fafafa"/></svg>
<div style="left:967px;top:239px;width:298px;height:58px;background:#cce4f7;border:1px solid #1f5fa6;border-radius:4px"></div>
<div style="left:971px;top:243px;width:52px;height:52px;background:#1aa6ff;border:1px solid #000"></div>
<div class="t" style="left:1031.00px;top:254.58px;font-size:27.25px;line-height:27.25px;letter-spacing:-0.234px;color:#000;">1: Cashew_nut</div>
<div style="left:1029px;top:280px;width:16px;height:1px;background:#000"></div>
<div style="left:1271px;top:239px;width:298px;height:58px;background:#fdfdfd;border:1px solid #d8d8d8;border-radius:4px"></div>
<div style="left:1275px;top:243px;width:52px;height:52px;background:#ff8a14;border:1px solid #000"></div>
<div class="t" style="left:1333.00px;top:254.58px;font-size:27.25px;line-height:27.25px;letter-spacing:-0.037px;color:#000;">2: Hazelnut</div>
<div style="left:1331px;top:280px;width:16px;height:1px;background:#000"></div>
<div style="left:1575px;top:239px;width:298px;height:58px;background:#fdfdfd;border:1px solid #d8d8d8;border-radius:4px"></div>
<div style="left:1579px;top:243px;width:52px;height:52px;background:#00b82e;border:1px solid #000"></div>
<div class="t" style="left:1637.50px;top:254.58px;font-size:27.25px;line-height:27.25px;letter-spacing:-0.076px;color:#000;">3: Walnut</div>
<div style="left:1635.5px;top:280px;width:16px;height:1px;background:#000"></div>
<div style="left:1880px;top:239px;width:298px;height:58px;background:#fdfdfd;border:1px solid #d8d8d8;border-radius:4px"></div>
<div style="left:1884px;top:243px;width:52px;height:52px;background:#7ffbff;border:1px solid #000"></div>
<div class="t" style="left:1941.00px;top:254.58px;font-size:27.25px;line-height:27.25px;letter-spacing:-0.324px;color:#000;">4: Hand</div>
<div style="left:1939px;top:280px;width:16px;height:1px;background:#000"></div>
<div style="left:922px;top:302px;width:2312px;height:1564px;border:1px solid #a0a0a0;border-right-color:#8a8a8a;border-bottom-color:#8a8a8a"></div>
<svg style="left:953px;top:328px;" width="2250" height="1512" viewBox="0 0 2250 1512"><defs><pattern id="chk" x="0" y="0" width="50" height="50" patternUnits="userSpaceOnUse"><rect width="50" height="50" fill="#1f1f1f"/><rect width="25" height="25" fill="#474747"/><rect x="25" y="25" width="25" height="25" fill="#474747"/></pattern></defs><rect width="2250" height="1512" fill="url(#chk)"/></svg>
<svg style="left:1175px;top:403px" width="1806" height="1361" viewBox="0 0 1818 1370" preserveAspectRatio="none"><use href="#img1"/><path d="M1352.6,955 L1352.6,937.2 L1378.9,937.2 L1397.6,952.5 Z" fill="#f2f8ff" stroke="#8a8a8a" stroke-width="1.2"/><rect x="1352.9" y="951.95" width="299.45" height="293.05" fill="none" stroke="#808080" stroke-width="1.6"/><rect x="1356.75" y="955.3" width="292.35" height="285.4" fill="none" stroke="#f4f8fc" stroke-width="5.8"/><rect x="1360.7" y="959.25" width="285.05" height="277.1" fill="none" stroke="#8c8c8c" stroke-width="2"/></svg>
<div style="left:811px;top:303px;width:73px;height:80px;background:#f0f0f0;border:1px solid #dadada"></div>
<svg style="left:838px;top:331px;" width="32" height="41" viewBox="0 0 32 41"><rect x="0.5" y="0.5" width="31" height="40" fill="#333" stroke="#000" stroke-width="1"/><rect x="1" y="1" width="10" height="10" fill="#6a6a6a"/><rect x="1" y="21" width="10" height="10" fill="#6a6a6a"/><rect x="11" y="11" width="10" height="10" fill="#6a6a6a"/><rect x="11" y="31" width="10" height="10" fill="#6a6a6a"/><rect x="21" y="1" width="10" height="10" fill="#6a6a6a"/><rect x="21" y="21" width="10" height="10" fill="#6a6a6a"/></svg>
<div style="left:827px;top:317px;width:32px;height:40px;background:#ff8a14;border:1px solid #000"></div>
<div style="left:812px;top:435px;width:78px;height:70px;background:#fbfbfb;border:1px solid #d9d9d9;border-radius:3px"></div>
<div style="left:812px;top:521px;width:78px;height:70px;background:#fbfbfb;border:1px solid #d9d9d9;border-radius:3px"></div>
<div style="left:812px;top:607px;width:78px;height:70px;background:#fbfbfb;border:1px solid #d9d9d9;border-radius:3px"></div>
<div style="left:812px;top:726px;width:78px;height:70px;background:#fbfbfb;border:1px solid #d9d9d9;border-radius:3px"></div>
<div style="left:812px;top:812px;width:78px;height:70px;background:#fbfbfb;border:1px solid #d9d9d9;border-radius:3px"></div>
<div style="left:812px;top:931px;width:78px;height:70px;background:#fbfbfb;border:1px solid #d9d9d9;border-radius:3px"></div>
<div style="left:812px;top:1017px;width:78px;height:70px;background:#fbfbfb;border:1px solid #d9d9d9;border-radius:3px"></div>
<div style="left:812px;top:1103px;width:78px;height:70px;background:#fbfbfb;border:1px solid #d9d9d9;border-radius:3px"></div>
<div style="left:812px;top:1189px;width:78px;height:70px;background:#fbfbfb;border:1px solid #d9d9d9;border-radius:3px"></div>
<div style="left:812px;top:1275px;width:78px;height:70px;background:#fbfbfb;border:1px solid #d9d9d9;border-radius:3px"></div>
<svg style="left:812px;top:435px" width="80" height="245" viewBox="0 0 447.00 1368.94"><defs><linearGradient id="pg" x1="0" y1="0" x2="1" y2="0.6"><stop offset="0" stop-color="#888"/><stop offset="0.6" stop-color="#111"/></linearGradient></defs><path d="M155,95 L155,245 L195,205 L232,285 L258,272 L220,193 L272,193 Z" fill="url(#pg)" stroke="#111" stroke-width="6" stroke-linejoin="round"/><path d="M185,770 C150,740 110,700 100,670 C95,650 120,645 140,665 L152,682 L140,600 C138,580 165,575 170,600 L182,640 L190,575 C195,555 225,555 227,580 L230,640 L247,585 C252,570 277,575 277,597 L272,652 L290,612 C298,597 325,602 322,627 C315,692 300,732 275,772 Z" fill="#fff" stroke="#111" stroke-width="11" stroke-linejoin="round"/><path d="M150,600 L160,640 M190,585 L196,630 M228,590 L230,640 M262,598 L262,650" stroke="#111" stroke-width="9"/><circle cx="178" cy="1112" r="55" fill="#fff" stroke="#111" stroke-width="13"/><path d="M165,1085 Q185,1075 205,1095" stroke="#5aa0f0" stroke-width="6" fill="none"/><path d="M222,1162 L298,1222" stroke="#111" stroke-width="24" stroke-linecap="round"/></svg>
<svg style="left:830px;top:740px;" width="42" height="42" viewBox="0 0 42 42"><g transform="rotate(-45 21 21)"><rect x="4" y="12" width="34" height="18" rx="3" fill="#e53935"/><rect x="26" y="12" width="12" height="18" rx="2" fill="#3f6fe0"/><rect x="4" y="26" width="22" height="5" rx="2" fill="#ff8a80" opacity="0.8"/></g></svg>
<svg style="left:828px;top:827px;" width="44" height="42" viewBox="0 0 44 42"><path d="M6,6 Q18,2 22,6 Q24,10 8,22 Q2,28 12,27 Q24,24 22,30 Q18,36 26,38 Q34,40 42,36" fill="none" stroke="#111" stroke-width="3.5" stroke-linecap="round"/></svg>
<svg style="left:831px;top:952px;" width="40" height="30" viewBox="0 0 40 30"><rect x="1.5" y="1.5" width="35" height="24" fill="#f9bf8a" stroke="#111" stroke-width="3"/></svg>
<svg style="left:829px;top:1037px;" width="44" height="34" viewBox="0 0 44 34"><ellipse cx="21" cy="16" rx="19" ry="15" fill="#f9bf8a" stroke="#111" stroke-width="3"/></svg>
<svg style="left:812px;top:1100px" width="80" height="245" viewBox="0 0 447.00 1368.94"><path d="M210,122 L205,210 L300,180 L325,325 L115,265 Z" fill="#f9bf8a" stroke="#222" stroke-width="16" stroke-linejoin="round"/><path d="M120,610 C100,560 170,545 195,580 C210,600 190,625 215,615 C280,590 330,630 320,720 C310,800 250,815 180,805 C110,800 100,760 130,745 C160,735 200,745 225,720 C240,700 200,690 160,680 C130,670 125,640 120,610 Z" fill="#f9bf8a" stroke="#222" stroke-width="15" stroke-linejoin="round"/><path d="M95,1210 L95,1130 Q100,1100 150,1100" stroke="#f9bf8a" stroke-width="34" fill="none" stroke-linecap="round"/><path d="M140,1150 L225,1070 L335,1180 Q345,1195 330,1210 L275,1260 Q260,1270 245,1258 Z" fill="#c9c9c9" stroke="#111" stroke-width="13" stroke-linejoin="round"/><path d="M220,1035 L220,1150" stroke="#111" stroke-width="12"/><path d="M195,1135 L220,1170 L245,1135 Z" fill="#111"/></svg>
<div class="t" style="left:798.00px;top:1894.35px;font-size:34.88px;line-height:34.88px;letter-spacing:-2.252px;color:#000;">Path</div>
<div style="left:966px;top:1887px;width:1688px;height:48px;background:#f0f0f0;border:1px solid #e3e3e3;border-top-color:#a0a0a0;border-left-color:#a0a0a0"></div>
<div class="t" style="left:973.00px;top:1887.94px;font-size:31.25px;line-height:31.25px;letter-spacing:-1.390px;color:#000;">C:\ProgramData\Aurora Vision\Aurora Vision Deep Learning 5.3\Examples\Deep Learning - Nuts Segmentation (Segment</div>
<div style="left:2657px;top:1886px;width:57px;height:50px;background:#fafafa;border:1px solid #dcdcdc;border-radius:3px"></div>
<svg style="left:2663px;top:1894px;" width="45" height="33" viewBox="0 0 45 33"><defs><linearGradient id="fg" x1="0" y1="0" x2="0" y2="1"><stop offset="0" stop-color="#ffe38a"/><stop offset="1" stop-color="#d9a21a"/></linearGradient></defs><path d="M2,4 L14,4 L17,8 L40,8 L40,30 L2,30 Z" fill="#b8860b"/><path d="M6,13 L44,13 L40,31 L1,31 Z" fill="url(#fg)"/></svg>
<div class="t" style="left:2748.00px;top:1898.29px;font-size:29.07px;line-height:29.07px;letter-spacing:-0.357px;color:#0000ff;">Show Model Details...</div>
<div style="left:2748px;top:1927px;width:274px;height:2px;background:#0000ff"></div>
<div style="left:3233px;top:56px;width:588px;height:92px;background:linear-gradient(#f9f9f9 0,#f8f8f8 82%,#f1f1f1 100%)"></div>
<div style="left:3236px;top:60px;width:2px;height:84px;border-left:2px dotted #b4b4b4"></div>
<div style="left:3232px;top:147px;width:1px;height:88px;background:#e6e6e6"></div>
<div class="t" style="left:3250.00px;top:85.47px;font-size:34.16px;line-height:34.16px;letter-spacing:-0.431px;color:#000;">Tools</div>
<div class="t" style="left:3240.00px;top:152.91px;font-size:28.34px;line-height:28.34px;letter-spacing:-0.223px;color:#000;">Marked Instances:</div>
<div style="left:3244px;top:196px;width:561px;height:467px;background:#fff;border:1px solid #8c9096"></div>
<div style="left:3246px;top:198px;width:557px;height:35px;background:#0078d7"></div>
<div class="t" style="left:3252.50px;top:203.50px;font-size:24.71px;line-height:24.71px;letter-spacing:-0.239px;color:#fff;">0</div>
<div style="left:3275px;top:199px;width:33px;height:33px;background:#ff8a14;border:1px solid #000"></div>
<div class="t" style="left:3315.00px;top:202.88px;font-size:25.44px;line-height:25.44px;letter-spacing:0.800px;color:#fff;">Hazelnut</div>
<div class="t" style="left:3252.50px;top:238.50px;font-size:24.71px;line-height:24.71px;letter-spacing:-0.239px;color:#000;">1</div>
<div style="left:3275px;top:234px;width:33px;height:33px;background:#ff8a14;border:1px solid #000"></div>
<div class="t" style="left:3315.00px;top:237.88px;font-size:25.44px;line-height:25.44px;letter-spacing:0.800px;color:#000;">Hazelnut</div>
<div class="t" style="left:3252.50px;top:273.50px;font-size:24.71px;line-height:24.71px;letter-spacing:-0.239px;color:#000;">2</div>
<div style="left:3275px;top:269px;width:33px;height:33px;background:#ff8a14;border:1px solid #000"></div>
<div class="t" style="left:3315.00px;top:272.88px;font-size:25.44px;line-height:25.44px;letter-spacing:0.800px;color:#000;">Hazelnut</div>
<div class="t" style="left:3252.50px;top:308.50px;font-size:24.71px;line-height:24.71px;letter-spacing:-0.239px;color:#000;">3</div>
<div style="left:3275px;top:304px;width:33px;height:33px;background:#ff8a14;border:1px solid #000"></div>
<div class="t" style="left:3315.00px;top:307.88px;font-size:25.44px;line-height:25.44px;letter-spacing:0.800px;color:#000;">Hazelnut</div>
<div class="t" style="left:3252.50px;top:343.50px;font-size:24.71px;line-height:24.71px;letter-spacing:-0.239px;color:#000;">4</div>
<div style="left:3275px;top:339px;width:33px;height:33px;background:#1aa6ff;border:1px solid #000"></div>
<div class="t" style="left:3315.00px;top:342.88px;font-size:25.44px;line-height:25.44px;letter-spacing:0.900px;color:#000;">Cashew_nut</div>
<div class="t" style="left:3252.50px;top:378.50px;font-size:24.71px;line-height:24.71px;letter-spacing:-0.239px;color:#000;">5</div>
<div style="left:3275px;top:374px;width:33px;height:33px;background:#1aa6ff;border:1px solid #000"></div>
<div class="t" style="left:3315.00px;top:377.88px;font-size:25.44px;line-height:25.44px;letter-spacing:0.900px;color:#000;">Cashew_nut</div>
<div class="t" style="left:3252.50px;top:413.50px;font-size:24.71px;line-height:24.71px;letter-spacing:-0.239px;color:#000;">6</div>
<div style="left:3275px;top:409px;width:33px;height:33px;background:#1aa6ff;border:1px solid #000"></div>
<div class="t" style="left:3315.00px;top:412.88px;font-size:25.44px;line-height:25.44px;letter-spacing:0.900px;color:#000;">Cashew_nut</div>
<div class="t" style="left:3252.50px;top:448.50px;font-size:24.71px;line-height:24.71px;letter-spacing:-0.239px;color:#000;">7</div>
<div style="left:3275px;top:444px;width:33px;height:33px;background:#1aa6ff;border:1px solid #000"></div>
<div class="t" style="left:3315.00px;top:447.88px;font-size:25.44px;line-height:25.44px;letter-spacing:0.900px;color:#000;">Cashew_nut</div>
<div class="t" style="left:3252.50px;top:483.50px;font-size:24.71px;line-height:24.71px;letter-spacing:-0.239px;color:#000;">8</div>
<div style="left:3275px;top:479px;width:33px;height:33px;background:#00b82e;border:1px solid #000"></div>
<div class="t" style="left:3315.00px;top:482.88px;font-size:25.44px;line-height:25.44px;letter-spacing:0.957px;color:#000;">Walnut</div>
<div style="left:3245px;top:674px;width:62px;height:55px;background:#fbfbfb;border:1px solid #d9d9d9;border-radius:3px"></div>
<div style="left:3314px;top:674px;width:62px;height:55px;background:#fbfbfb;border:1px solid #d9d9d9;border-radius:3px"></div>
<div style="left:3383px;top:674px;width:62px;height:55px;background:#fbfbfb;border:1px solid #d9d9d9;border-radius:3px"></div>
<div style="left:3453px;top:674px;width:62px;height:55px;background:#fbfbfb;border:1px solid #d9d9d9;border-radius:3px"></div>
<svg style="left:3240px;top:668px" width="80" height="66" viewBox="3240 668 80 66"><path d="M3268.8,682.7 L3281.8,682.7 L3281.8,695.2 L3296,695.2 L3296,706.6 L3281.8,706.6 L3281.8,719.1 L3268.8,719.1 L3268.8,706.6 L3254.7,706.6 L3254.7,695.2 L3268.8,695.2 Z" fill="#f0a820" stroke="#444" stroke-width="2"/></svg>
<svg style="left:3310px;top:668px" width="70" height="66" viewBox="3310 668 70 66"><path d="M3328.6,688.1 L3360.7,714.2 M3360.7,688.1 L3328.6,714.2" stroke="#e8413a" stroke-width="8.5" stroke-linecap="round"/></svg>
<svg style="left:3380px;top:668px" width="70" height="66" viewBox="3380 668 70 66"><ellipse cx="3402.5" cy="691.4" rx="11.3" ry="10" fill="#c86f2a"/><ellipse cx="3427" cy="691.4" rx="11.3" ry="10" fill="#2a5fd0"/><ellipse cx="3415.5" cy="712.6" rx="11.3" ry="10" fill="#94c82a"/><text x="3402.5" y="696" font-size="13" text-anchor="middle" fill="#fff" font-family="Liberation Sans">A</text><text x="3427" y="696" font-size="13" font-weight="bold" text-anchor="middle" fill="#fff" font-family="Liberation Sans">B</text><text x="3415.5" y="717.2" font-size="13" text-anchor="middle" fill="#fff" font-family="Liberation Sans">C</text></svg>
<svg style="left:3450px;top:668px" width="70" height="66" viewBox="3450 668 70 66"><g transform="rotate(-40 3483 701)"><path d="M3466,701 A17,14 0 0 1 3481,687 L3481,699 Z M3485,687 A17,14 0 0 1 3500,699 L3485,699 Z M3500,703 A17,14 0 0 1 3485,715 L3485,703 Z M3481,715 A17,14 0 0 1 3466,703 L3481,703 Z" fill="#ff9a50" stroke="#555" stroke-width="0.8"/></g><path d="M3463,683 L3479,697 M3487,704 L3502,717" stroke="#000" stroke-width="4.5"/><path d="M3457.5,678 L3470,681 L3461,690 Z M3507,723 L3495,720 L3503,711 Z" fill="#000"/></svg>
<div style="left:3741px;top:674px;width:62px;height:55px;background:#cce4f7;border:1.5px solid #0a52a0;border-radius:5px"></div>
<svg style="left:3730px;top:668px" width="80" height="66" viewBox="3730 668 80 66"><ellipse cx="3759.4" cy="689.2" rx="13.2" ry="10" transform="rotate(12 3759.4 689.2)" fill="#ffad7a" stroke="#ff7a1a" stroke-width="2"/><ellipse cx="3786.4" cy="691.1" rx="11.8" ry="10.8" transform="rotate(-20 3786.4 691.1)" fill="#00ccff" stroke="#10a0c8" stroke-width="2"/><ellipse cx="3768" cy="712.3" rx="14.8" ry="10.8" fill="#ff5555" stroke="#dd1010" stroke-width="2"/></svg>
<div class="t" style="left:3255.00px;top:753.17px;font-size:29.80px;line-height:29.80px;letter-spacing:-0.852px;color:#000;">Options:</div>
<div style="left:3286px;top:814px;width:32px;height:32px;background:#f0f0f0;border:1.5px solid #5a5a5a;border-radius:5px"></div>
<div class="t" style="left:3328.00px;top:815.29px;font-size:29.07px;line-height:29.07px;letter-spacing:-0.468px;color:#000;">Automatic Instance Creation</div>
<div class="t" style="left:3255.00px;top:877.79px;font-size:29.07px;line-height:29.07px;letter-spacing:-0.464px;color:#000;">Maximal number of objects marked</div>
<div class="t" style="left:3255.00px;top:909.29px;font-size:29.07px;line-height:29.07px;letter-spacing:-0.378px;color:#000;">on a single image: 9</div>
<svg style="left:3752px;top:877px;" width="35" height="35" viewBox="0 0 35 35"><defs><radialGradient id="hb2" cx="0.4" cy="0.3" r="0.8"><stop offset="0" stop-color="#6ec0ff"/><stop offset="1" stop-color="#1a7fe0"/></radialGradient></defs><circle cx="17.5" cy="17.5" r="16.5" fill="url(#hb2)" stroke="#1869c0" stroke-width="1"/><text x="17.5" y="27" text-anchor="middle" font-family="Liberation Sans" font-weight="bold" font-size="26" fill="#fff">?</text></svg>
<div style="left:3375px;top:1877px;width:213px;height:58px;background:#fdfdfd;border:1px solid #cfcfcf;border-radius:3px"></div>
<svg style="left:3370px;top:1870px" width="60" height="70" viewBox="3370 1870 60 70"><path d="M3381.5,1888.5 L3412.5,1905 L3381.5,1922.5 Z" fill="#7b9bb8" stroke="#4f6a80" stroke-width="3.2" stroke-linejoin="round"/></svg>
<div class="t" style="left:3424.50px;top:1889.94px;font-size:31.25px;line-height:31.25px;letter-spacing:-1.633px;color:#000;">Train</div>
<div style="left:3604px;top:1877px;width:213px;height:58px;background:#f3f3f3;border:1px solid #e3e3e3;border-radius:3px"></div>
<svg style="left:3600px;top:1870px" width="60" height="70" viewBox="3600 1870 60 70"><path d="M3608.5,1888.5 L3621,1905 L3608.5,1922.5 Z M3627.5,1888.5 L3643.5,1905 L3627.5,1922.5 Z" fill="#a9a9a9" stroke="#9c9c9c" stroke-width="3" stroke-linejoin="round"/></svg>
<div class="t" style="left:3653.50px;top:1889.94px;font-size:31.25px;line-height:31.25px;letter-spacing:-2.575px;color:#9a9a9a;">Resume</div>
</body></html>
